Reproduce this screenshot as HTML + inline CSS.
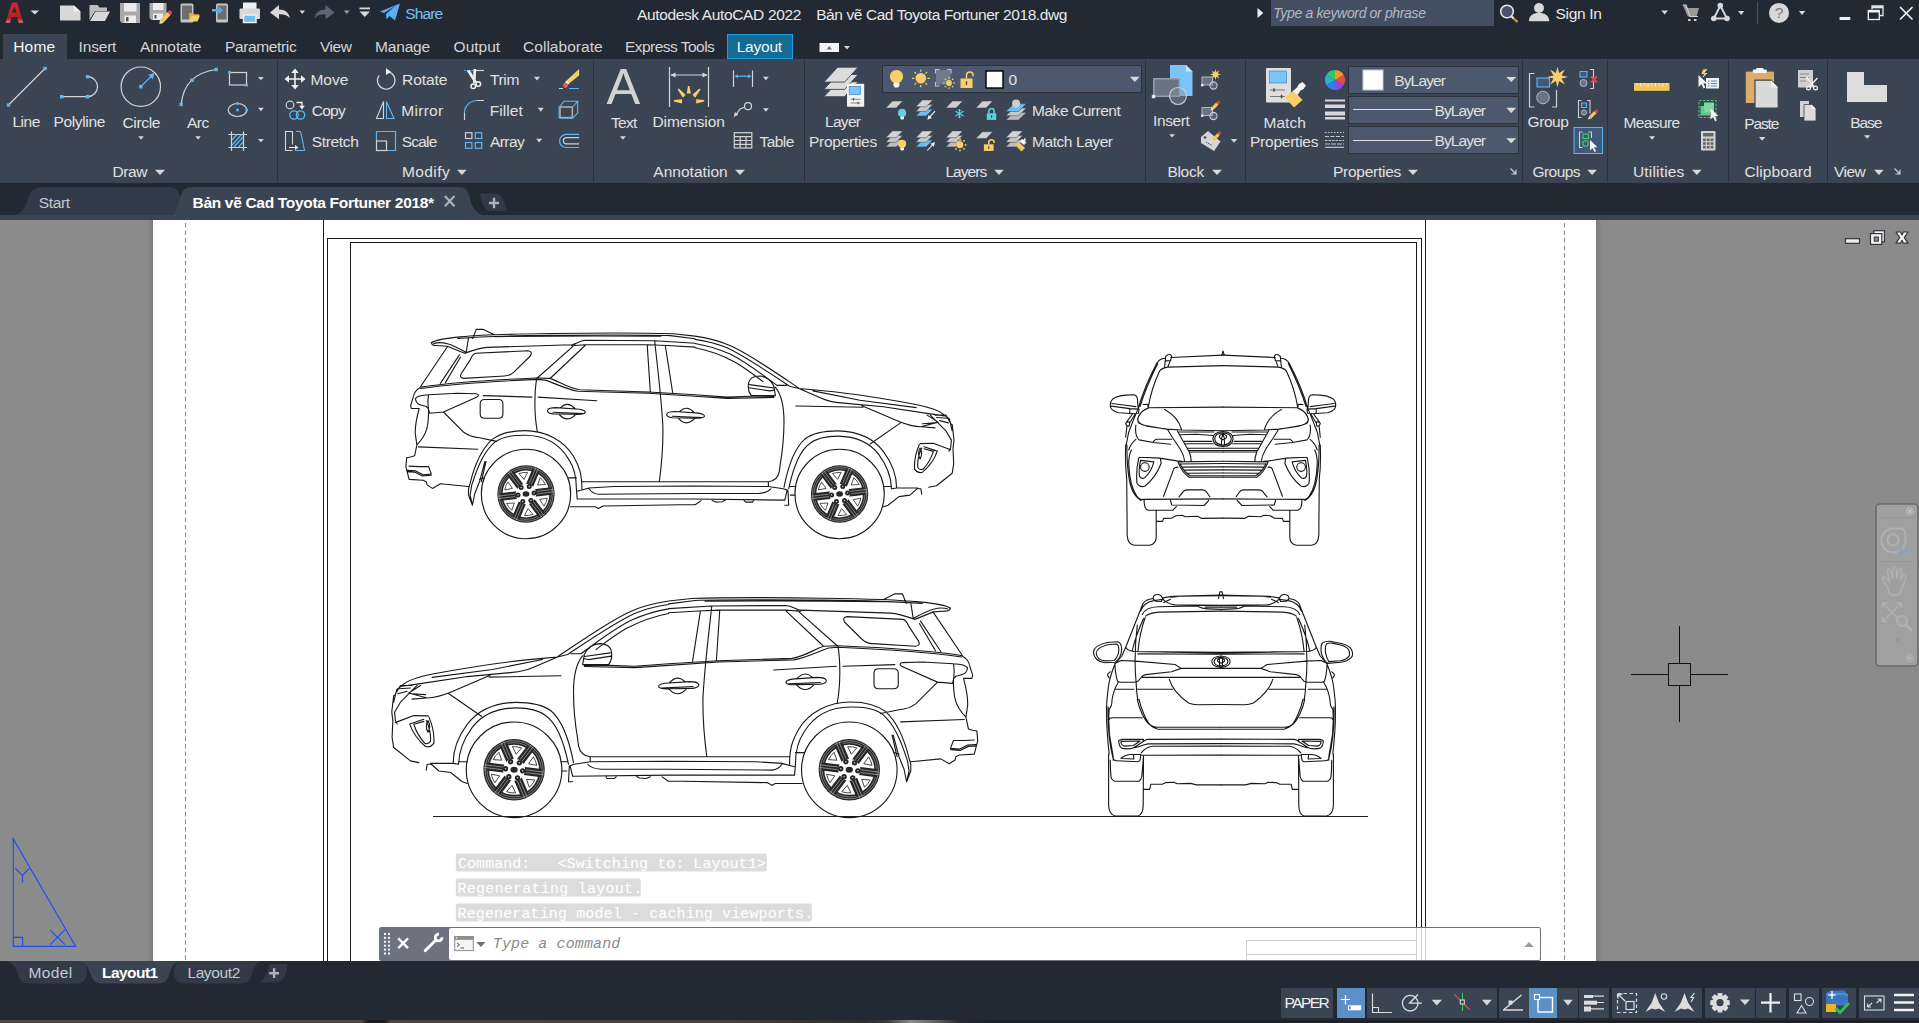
<!DOCTYPE html>
<html><head><meta charset="utf-8"><title>Autodesk AutoCAD 2022 - Bản vẽ Cad Toyota Fortuner 2018.dwg</title>
<style>
html,body{margin:0;padding:0;background:#222933;overflow:hidden}
#app{position:relative;width:1919px;height:1023px;overflow:hidden;font-family:"Liberation Sans",sans-serif}
#app>div{position:absolute}
#app>span{position:absolute;white-space:pre}
#app>svg{position:absolute;left:0;top:0}
</style></head><body><div id="app">
<div style="left:0px;top:0px;width:1919px;height:1023px;background:#222933;"></div>
<div style="left:0px;top:59px;width:1919px;height:124px;background:#3b4453;"></div>
<div style="left:3px;top:34px;width:64px;height:26px;background:#3b4453;"></div>
<div style="left:727px;top:34px;width:66px;height:25px;background:#146b94;border:1px solid #1a9de4;box-sizing:border-box;"></div>
<div style="left:1271px;top:0px;width:223px;height:26px;background:#454f63;"></div>
<div style="left:0px;top:215px;width:1919px;height:5px;background:#3b4453;"></div>
<div style="left:0px;top:220px;width:1919px;height:741px;background:#8b8b8b;"></div>
<div style="left:153px;top:220px;width:1443px;height:741px;background:#ffffff;"></div>
<div style="left:147px;top:220px;width:6px;height:741px;background:linear-gradient(90deg,#8b8b8b,#7c7c7c);"></div>
<div style="left:1596px;top:220px;width:6px;height:741px;background:linear-gradient(90deg,#7c7c7c,#8b8b8b);"></div>
<div style="left:0px;top:1020px;width:1919px;height:3px;background:linear-gradient(90deg,#4f4a40 0,#4f4a40 18.8%,#1a1b20 19.2%,#1a1b20 20%,#4a453c 20.4%,#46413a 38%,#2c2c2e 45%,#3a3a3c 46.2%,#8a8a8a 47.5%,#6a6a6a 48.5%,#26282e 50%,#1d2027 52%,#1d2027 100%);"></div>
<svg width="1919" height="1023" viewBox="0 0 1919 1023">
<rect x="819.5" y="43" width="19.5" height="9" fill="#f4f4f4"/><path d="M826.5 49.5h5.5l-2.75-3.5z" fill="#707070"/>
<path d="M844.0 46.0H850.0L847.0 49.5Z" fill="#d8d8d8"/>
<rect x="277" y="60" width="1" height="122" fill="#2a313c"/>
<rect x="593" y="60" width="1" height="122" fill="#2a313c"/>
<rect x="804" y="60" width="1" height="122" fill="#2a313c"/>
<rect x="1145" y="60" width="1" height="122" fill="#2a313c"/>
<rect x="1245" y="60" width="1" height="122" fill="#2a313c"/>
<rect x="1522" y="60" width="1" height="122" fill="#2a313c"/>
<rect x="1607" y="60" width="1" height="122" fill="#2a313c"/>
<rect x="1728" y="60" width="1" height="122" fill="#2a313c"/>
<rect x="1827" y="60" width="1" height="122" fill="#2a313c"/>
<path d="M155.0 169.7H165.0L160.0 175.0Z" fill="#d8d8d8"/>
<path d="M457.0 169.7H466.7L461.9 175.0Z" fill="#d8d8d8"/>
<path d="M735.0 169.7H745.0L740.0 175.0Z" fill="#d8d8d8"/>
<path d="M994.2 169.7H1003.8L999.0 175.0Z" fill="#d8d8d8"/>
<path d="M1212.0 169.7H1222.0L1217.0 175.0Z" fill="#d8d8d8"/>
<path d="M1408.0 169.7H1418.0L1413.0 175.0Z" fill="#d8d8d8"/>
<path d="M1587.2 169.7H1597.0L1592.1 175.0Z" fill="#d8d8d8"/>
<path d="M1692.0 169.7H1701.7L1696.8 175.0Z" fill="#d8d8d8"/>
<path d="M1874.1 169.7H1883.7L1878.9 175.0Z" fill="#d8d8d8"/>
<path d="M1510.5 168.5l5 5M1516.0 169.5v4.5h-4.5" stroke="#d0d0d0" stroke-width="1.2" fill="none"/>
<path d="M1894.5 168.5l5 5M1900.0 169.5v4.5h-4.5" stroke="#d0d0d0" stroke-width="1.2" fill="none"/>
<path d="M138.3 136.3H143.7L141.0 139.7Z" fill="#d8d8d8"/>
<path d="M195.3 136.3H200.8L198.1 139.7Z" fill="#d8d8d8"/>
<path d="M258.0 77.0H263.8L260.9 80.3Z" fill="#d8d8d8"/>
<path d="M258.0 107.8H263.8L260.9 111.2Z" fill="#d8d8d8"/>
<path d="M258.0 139.0H263.8L260.9 142.3Z" fill="#d8d8d8"/>
<path d="M534.0 76.7H540.0L537.0 80.5Z" fill="#d8d8d8"/>
<path d="M537.8 107.8H543.7L540.8 111.7Z" fill="#d8d8d8"/>
<path d="M536.2 138.7H542.0L539.1 142.5Z" fill="#d8d8d8"/>
<path d="M620.0 136.3H625.8L622.9 139.7Z" fill="#d8d8d8"/>
<path d="M763.0 76.7H768.8L765.9 80.3Z" fill="#d8d8d8"/>
<path d="M763.0 108.3H768.8L765.9 111.7Z" fill="#d8d8d8"/>
<rect x="882.5" y="65.5" width="259" height="27" fill="#4c586d" stroke="#2a313c" stroke-width="1"/>
<rect x="986" y="71" width="17" height="17" fill="#fff" stroke="#000" stroke-width="1.4"/>
<path d="M1130.0 76.7H1139.7L1134.8 82.0Z" fill="#d8d8d8"/>
<path d="M1169.2 134.2H1175.0L1172.1 137.5Z" fill="#d8d8d8"/>
<path d="M1230.8 139.0H1237.2L1234.0 142.8Z" fill="#d8d8d8"/>
<rect x="1348.5" y="66.5" width="170" height="27" fill="#4c586d" stroke="#2a313c" stroke-width="1"/>
<rect x="1348.5" y="96.5" width="170" height="27" fill="#4c586d" stroke="#2a313c" stroke-width="1"/>
<rect x="1348.5" y="126.5" width="170" height="27" fill="#4c586d" stroke="#2a313c" stroke-width="1"/>
<rect x="1363" y="70" width="20" height="20" fill="#fff" stroke="#c8c8c8" stroke-width="1"/>
<path d="M1353 109.5H1432.5M1353 140.5H1432.5" stroke="#e0e0e0" stroke-width="1"/>
<path d="M1506.3 77.0H1516.2L1511.2 82.0Z" fill="#d8d8d8"/>
<path d="M1506.3 107.8H1516.2L1511.2 113.0Z" fill="#d8d8d8"/>
<path d="M1506.3 138.3H1516.2L1511.2 143.3Z" fill="#d8d8d8"/>
<rect x="1574" y="127.5" width="28.5" height="26" fill="#40587a" stroke="#5db7f3" stroke-width="1"/>
<path d="M1649.2 136.3H1655.0L1652.1 139.7Z" fill="#d8d8d8"/>
<path d="M1759.0 137.0H1765.4L1762.2 140.7Z" fill="#d8d8d8"/>
<path d="M1864.1 135.2H1870.2L1867.2 138.8Z" fill="#d8d8d8"/>
<path d="M14 215C22 214 25 208 27.500 200C30 192 33 187 42 187H169C176 187 180.500 192 180.500 201C180.500 210 176 215 169 215z" fill="#323a48"/>
<path d="M160 220C171 219 175 214 177.500 206L180.500 196C182.500 190 186 187 193 187H459C465 187 467.500 190 469.500 197C472 207 475 213 483 215L490 220z" fill="#3b4453"/>
<path d="M480 193.400H495C502 194 506 202 506 211H489.500C484 210 481.500 202 480 193.400z" fill="#323a48"/>
<path d="M444.800 196l9.700 10.300M454.500 196l-9.700 10.300" stroke="#aeb2ba" stroke-width="2.100"/>
<path d="M489 203h10M494 197.800v10.400" stroke="#aeb2ba" stroke-width="2.400"/>
<defs><linearGradient id="gA" x1="0" y1="0" x2="0" y2="1"><stop offset="0" stop-color="#d4262b"/><stop offset=".55" stop-color="#bc2428"/><stop offset=".78" stop-color="#a82226"/><stop offset="1" stop-color="#ec7272"/></linearGradient></defs><path d="M5.500 22.700L12 2.500H17L23.300 22.700H18.600L17.200 17H11.600L10.100 22.700ZM14.500 6.300L12 12.600H16.600Z" fill="url(#gA)" fill-rule="evenodd"/>
<path d="M30.5 10.5H39.0L34.8 14.5Z" fill="#d8d8d8"/>
<path d="M60 5.500h14l6.500 6v9H60z" fill="#d8d8d8"/><path d="M74 5.500v6h6.500z" fill="#f4f4f4"/>
<path d="M89.500 5h8l2 2.500h7.500v3.500H95l-5.500 9z" fill="#bdbdbd"/><path d="M95.500 11.500H110l-5 9.500H90z" fill="#d8d8d8"/>
<path d="M120 3h20v20h-18l-2-2z" fill="#a9a9a9"/><rect x="124" y="3" width="12.500" height="8.500" fill="#ececec"/><rect x="124.5" y="15.500" width="11.500" height="7.500" fill="#ececec"/><rect x="126" y="17" width="2.500" height="4.500" fill="#555"/>
<path d="M149.500 3h17v17h-15l-2-2z" fill="#a9a9a9"/><rect x="153" y="3" width="10.500" height="7" fill="#ececec"/><rect x="153" y="13.500" width="10" height="6.500" fill="#ececec"/><rect x="154.500" y="15" width="2" height="3.500" fill="#555"/><path d="M160 20l7.500-8 3 3-7.500 8-3.500.800z" fill="#f3c65a"/><path d="M167.500 12l1.200-1.300a1.500 1.500 0 0 1 2.100 0l.9.900a1.500 1.500 0 0 1 0 2.100L170.500 15z" fill="#e2404a"/><path d="M160 20l3 3-3.500.800z" fill="#d8d8d8"/>
<rect x="180.500" y="3.500" width="13" height="19" rx="1.500" fill="#c4c4c4"/><rect x="182" y="5.500" width="10" height="14" fill="#6e6e6e"/><path d="M189 13h4l1 1.200h5v2H191.500l-2.500 5z" fill="#e0a830"/><path d="M191.500 15.500h8.500l-2.500 6h-8.500z" fill="#f8cf6a"/>
<rect x="216" y="3.500" width="12" height="19" rx="1.500" fill="#c4c4c4"/><rect x="217.500" y="5.500" width="9" height="14" fill="#6e6e6e"/><path d="M212 9h6.500v-2.800l4.500 4-4.500 4v-2.800H212z" fill="#4fb0f5"/>
<rect x="243" y="2.500" width="13.500" height="7" fill="#f0f0f0"/><rect x="239.500" y="8.500" width="20.500" height="10.500" rx="1" fill="#d8d8d8"/><rect x="243.500" y="15" width="12.500" height="7.500" fill="#6cbcf5" stroke="#f0f0f0" stroke-width="1.500"/>
<path d="M270 12.500l9-7.500v4.500c6 0 10 3 11 9-2.500-3.500-6-4.500-11-4.300v5z" fill="#d8d8d8"/>
<path d="M299.5 10.5H305.0L302.2 14.0Z" fill="#d8d8d8"/>
<path d="M334.500 12.500l-9-7.500v4.500c-6 0-10 3-11 9 2.500-3.500 6-4.500 11-4.300v5z" fill="#5d6571"/>
<path d="M344.0 10.5H349.5L346.8 14.0Z" fill="#9ea3ab"/>
<rect x="359.500" y="7.500" width="10.500" height="1.800" fill="#d8d8d8"/><path d="M359.500 11.500h10.500l-5.250 5.500z" fill="#d8d8d8"/>
<path d="M380 11.500L400 3.500l-5 17-5.500-4.500-3 3.500-.5-5.500 9-8-11 7z" fill="#56b0f2"/>
<path d="M1257.500 8v10l5.800-5z" fill="#f0f0f0"/>
<circle cx="1507" cy="11.500" r="6.300" fill="#4a5468" stroke="#e8e8e8" stroke-width="1.600"/><path d="M1511.500 16.500l6 5.500" stroke="#d89a4a" stroke-width="2.200"/><path d="M1511.500 16.500l2 1.800" stroke="#e8e8e8" stroke-width="2"/>
<circle cx="1539" cy="8" r="5" fill="#d8d8d8"/><path d="M1528.800 21.300c.5-6 4-8.300 10.200-8.300s9.700 2.300 10.300 8.300z" fill="#d8d8d8"/>
<path d="M1661.3 10.5H1668.0L1664.7 14.5Z" fill="#d8d8d8"/>
<path d="M1682.800 5h3.200l1.500 3h11.500l-2.500 8.500h-8.800z" fill="#9a9a9a"/><path d="M1682.800 5h3.200l4 11.500h8" fill="none" stroke="#cfcfcf" stroke-width="1.200"/><rect x="1688" y="19" width="2.500" height="2" fill="#cfcfcf"/><rect x="1694" y="19" width="2.500" height="2" fill="#cfcfcf"/>
<path d="M1720.300 5.600L1713.800 18.500h13.200z" fill="none" stroke="#d8d8d8" stroke-width="2"/><circle cx="1720.300" cy="5.600" r="2.800" fill="#d8d8d8"/><circle cx="1713.800" cy="18.500" r="2.800" fill="#d8d8d8"/><circle cx="1727" cy="18.500" r="2.800" fill="#d8d8d8"/>
<path d="M1738.0 11.0H1744.3L1741.2 15.0Z" fill="#d8d8d8"/>
<rect x="1757" y="2" width="1" height="22" fill="#4a5670"/>
<circle cx="1779" cy="12.900" r="10" fill="#d8d8d8"/>
<path d="M1798.8 11.0H1805.3L1802.0 15.0Z" fill="#d8d8d8"/>
<rect x="1839.600" y="17" width="10.700" height="3" fill="#f0f0f0"/>
<path d="M1872 9.500v-3.500h11v9.500h-3.500" fill="none" stroke="#e8e8e8" stroke-width="1.300"/><path d="M1872 7.300h11" stroke="#e8e8e8" stroke-width="2"/><rect x="1868.300" y="10.500" width="11" height="9" fill="none" stroke="#f0f0f0" stroke-width="1.300"/><path d="M1868.300 11.500h11" stroke="#f0f0f0" stroke-width="2"/>
<path d="M1900 7l12.500 12.500M1912.500 7l-12.500 12.500" stroke="#f0f0f0" stroke-width="1.700"/>
<path d="M8.500 105L45 68.500" stroke="#d4d4d4" stroke-width="1.200"/><rect x="6.8" y="103.3" width="3.4" height="3.4" fill="#5cb8f5"/><rect x="43.3" y="66.8" width="3.4" height="3.4" fill="#5cb8f5"/>
<path d="M61.700 96.700H87.500M87.500 96.700a10 10 0 0 0 0-20" stroke="#d4d4d4" stroke-width="1.200" fill="none"/><rect x="60.0" y="95.0" width="3.4" height="3.4" fill="#5cb8f5"/><rect x="85.8" y="95.0" width="3.4" height="3.4" fill="#5cb8f5"/><rect x="85.8" y="75.0" width="3.4" height="3.4" fill="#5cb8f5"/>
<circle cx="140.800" cy="86.700" r="19.700" fill="none" stroke="#d4d4d4" stroke-width="1.200"/><path d="M140.800 86.700L152 75.500" stroke="#5cb8f5" stroke-width="1.200"/><path d="M154.500 73l-6.200 1.800 4.400 4.400z" fill="#5cb8f5"/><rect x="139.1" y="85.0" width="3.4" height="3.4" fill="#5cb8f5"/>
<path d="M181.200 104.500Q184 74 216.200 69.500" stroke="#d4d4d4" stroke-width="1.200" fill="none"/><rect x="179.5" y="102.8" width="3.4" height="3.4" fill="#5cb8f5"/><rect x="190.3" y="78.6" width="3.4" height="3.4" fill="#5cb8f5"/><rect x="214.5" y="67.8" width="3.4" height="3.4" fill="#5cb8f5"/>
<rect x="229.500" y="72.500" width="17" height="12.500" fill="none" stroke="#d4d4d4" stroke-width="1.200"/><rect x="228.1" y="71.1" width="2.8" height="2.8" fill="#5cb8f5"/><rect x="245.1" y="83.6" width="2.8" height="2.8" fill="#5cb8f5"/>
<ellipse cx="237.500" cy="110" rx="9.300" ry="6.500" fill="none" stroke="#d4d4d4" stroke-width="1.200"/><rect x="236.2" y="108.7" width="2.6" height="2.6" fill="#5cb8f5"/><rect x="236.2" y="102.2" width="2.6" height="2.6" fill="#5cb8f5"/><rect x="245.5" y="108.7" width="2.6" height="2.6" fill="#5cb8f5"/>
<path d="M231.500 131.500v19.500M243.500 131.500v19.500M228.500 134.500h18.500M228.500 147.500h18.500" stroke="#d4d4d4" stroke-width="1.200"/><path d="M232 140l5-5.500M232 145l9.500-10.500M234 147l9-10M238.500 147l4.500-5" stroke="#5cb8f5" stroke-width="1.200"/>
<path d="M295 70.500v17M286.500 79h17" stroke="#f0f0f0" stroke-width="1.600"/><path d="M295 68.500l3.800 4.500h-7.600zM295 89.500l3.800-4.500h-7.600zM284.500 79l4.500-3.800v7.600zM305.500 79l-4.500-3.800v7.600z" fill="#f0f0f0"/>
<circle cx="290" cy="105" r="3.800" fill="none" stroke="#d4d4d4" stroke-width="1.200"/><path d="M296.500 102.500h5.500v4" stroke="#f0f0f0" stroke-width="1.300" fill="none"/><path d="M302 109.500l-2.800-3.800h5.600z" fill="#f0f0f0"/><circle cx="294" cy="115" r="4.200" fill="none" stroke="#5cb8f5" stroke-width="1.300"/><circle cx="300.500" cy="115" r="4.200" fill="none" stroke="#5cb8f5" stroke-width="1.300"/>
<path d="M292.500 150.500H285.500V131.500H292.500V144.500" stroke="#d4d4d4" stroke-width="1.100" fill="none"/><path d="M296 131.500h4.500l4 19h-9.500" stroke="#5cb8f5" stroke-width="1.100" fill="none"/><path d="M289 147.500h7" stroke="#f0f0f0" stroke-width="1.100"/><path d="M298.500 147.500l-3.500-2.500v5z" fill="#f0f0f0"/>
<path d="M388.500 71.800a8.800 8.800 0 1 1-9.500 3.500" stroke="#d4d4d4" stroke-width="1.300" fill="none"/><path d="M391 71.800l-5-3.500v6.800z" fill="#f0f0f0"/>
<path d="M383.500 101.500v17h-7z" stroke="#d4d4d4" stroke-width="1.100" fill="none"/><path d="M386.500 101.500v17h7.500z" stroke="#5cb8f5" stroke-width="1.100" fill="none"/>
<path d="M376.500 141v-9.500h19v19h-9" stroke="#5cb8f5" stroke-width="1.200" fill="none"/><rect x="376.500" y="141" width="10" height="9.500" fill="none" stroke="#d4d4d4" stroke-width="1.200"/>
<path d="M464 70.500h9" stroke="#5cb8f5" stroke-width="1.200" stroke-dasharray="1.500 1"/><path d="M475 70.500h9" stroke="#d4d4d4" stroke-width="1.200"/><path d="M466.800 71L469.600 69.800L477 82L474.800 83.200ZM473.400 69H476.200L475.600 82L473 83.500Z" fill="#f0f0f0"/><circle cx="473.300" cy="86.300" r="2.300" fill="none" stroke="#f0f0f0" stroke-width="1.500"/><circle cx="478.300" cy="84" r="2.300" fill="none" stroke="#f0f0f0" stroke-width="1.500"/>
<path d="M464.500 113v7M477 100.500h7" stroke="#d4d4d4" stroke-width="1.200" fill="none"/><path d="M464.500 113a12.500 12.500 0 0 1 12.500-12.500" stroke="#5cb8f5" stroke-width="1.200" fill="none"/>
<rect x="465.5" y="132.7" width="6.400" height="5.800" fill="none" stroke="#d4d4d4" stroke-width="1.200"/>
<rect x="475.3" y="132.7" width="6.400" height="5.800" fill="none" stroke="#5cb8f5" stroke-width="1.200"/>
<rect x="465.5" y="142.5" width="6.400" height="5.800" fill="none" stroke="#5cb8f5" stroke-width="1.200"/>
<rect x="475.3" y="142.5" width="6.400" height="5.800" fill="none" stroke="#5cb8f5" stroke-width="1.200"/>
<path d="M579.100 69.100V75.600L569.700 83.100L566.600 80.600Z" fill="#f8cf6a"/><path d="M566.600 80.600L569.700 83.100L568.200 84.500L565 82.200Z" fill="#f4f4f4"/><path d="M565 82.200L568.200 84.500L567.300 87Q565.500 88.500 564.500 87.900L563.200 86.100Q563 84.500 563.600 83.800Z" fill="#f05a5a"/><path d="M559 88.500h4" stroke="#d4d4d4" stroke-width="1"/><path d="M569 88.500h10" stroke="#5cb8f5" stroke-width="1"/>
<path d="M559.500 106.500L564.100 101.300H577.700L573.200 106.500M577.700 101.300V112.900L573.200 117.600" fill="none" stroke="#5cb8f5" stroke-width="1.100"/><rect x="560" y="107" width="12.300" height="10.600" fill="none" stroke="#b4b4b4" stroke-width="1.500"/><path d="M559 106v12.300h14.200" fill="none" stroke="#5cb8f5" stroke-width=".8"/>
<path d="M579.100 134.300H566.200a6.600 6.600 0 0 0 0 13.200H579.100" fill="none" stroke="#5cb8f5" stroke-width="1.200"/><path d="M579.100 137.600H566.500a3.100 3.100 0 0 0 0 6.200H579.100" fill="none" stroke="#d0d0d0" stroke-width="1.200"/>
<path d="M669.500 67v40M708.500 67v40M671 75h36" stroke="#d4d4d4" stroke-width="1.200"/><path d="M670.500 75l5-2.500v5zM707.500 75l-5-2.500v5z" fill="#d4d4d4"/><path d="M688 86h1.500l1.300 7.600h-4.100zM677.600 89.500l1.200-.9 6.800 6.200-2.600 2.900zM700.500 89.500l-1.200-.9-6.800 6.200 2.600 2.900zM674 100l0 1.500 8 2v-4.200zM704.200 100l0 1.500-8 2v-4.200z" fill="#f8cf6a"/>
<path d="M733.500 70.500v16.500M752.500 70.500v16.500" stroke="#d4d4d4" stroke-width="1.200"/><path d="M736 76.200h14" stroke="#5cb8f5" stroke-width="1.200"/><path d="M734.500 76.200l3.500-2v4zM751.500 76.200l-3.500-2v4z" fill="#5cb8f5"/>
<circle cx="748" cy="106.200" r="3.500" fill="none" stroke="#d4d4d4" stroke-width="1.200"/><path d="M744.700 107.200l-4.500 1.500-4.500 6.500" stroke="#d4d4d4" stroke-width="1.200" fill="none"/><path d="M733.800 117l1-5 3.500 2.800z" fill="#d4d4d4"/>
<rect x="734.300" y="132.700" width="17.500" height="15.300" fill="none" stroke="#d4d4d4" stroke-width="1.200"/><path d="M734.300 136.700h17.500M734.300 140.500h17.500M734.300 144.300h17.500M740.200 136.700v11.300M746 136.700v11.300" stroke="#d4d4d4" stroke-width="1.200"/>
<path d="M837.700 81.8H858.100L844.600 96.7H823.900Z" fill="#dcdcdc" stroke="#3b4453" stroke-width=".9"/><path d="M837.700 74.5H858.100L844.600 89.4H823.900Z" fill="#dcdcdc" stroke="#3b4453" stroke-width=".9"/><path d="M837.700 67.2H858.100L844.600 82.1H823.900Z" fill="#dcdcdc" stroke="#3b4453" stroke-width=".9"/>
<rect x="847" y="83.800" width="17.200" height="23" rx=".8" fill="#f2f2f2"/><rect x="849.300" y="86.400" width="11.200" height="8" fill="#7cc4f8" stroke="#4a90d0" stroke-width=".8"/><path d="M850.500 99.300h10M850.500 103h10" stroke="#777" stroke-width=".9"/><path d="M853.500 98v2.600M858 101.700v2.600" stroke="#555" stroke-width="1.200"/>
<circle cx="896.5" cy="76.5" r="6.6" fill="#f8cf6a"/><path d="M893.5 82.4h5.9v3.0l-1.3 2.0h-3.3l-1.3 -2.0z" fill="#f4f4f4"/>
<circle cx="920.8" cy="78.3" r="5.3" fill="#f8cf6a"/><path d="M927.4 78.3L929.7 78.3M925.5 83.0L927.1 84.6M920.8 84.9L920.8 87.2M916.1 83.0L914.5 84.6M914.2 78.3L911.9 78.3M916.1 73.6L914.5 72.0M920.8 71.7L920.8 69.4M925.5 73.6L927.1 72.0" stroke="#f8cf6a" stroke-width="1.2"/>
<rect x="936" y="70" width="14.500" height="14.500" fill="#6f7a8c"/><path d="M935.500 73.500v-4h4M947 69.500h4v4M935.500 82v4h4" fill="none" stroke="#c4c8ce" stroke-width="1.100"/><circle cx="949" cy="83" r="2.900" fill="#f8cf6a"/><rect x="953.4" y="82.3" width="1.400" height="1.400" fill="#f8cf6a"/><rect x="951.9" y="85.9" width="1.400" height="1.400" fill="#f8cf6a"/><rect x="948.3" y="87.4" width="1.400" height="1.400" fill="#f8cf6a"/><rect x="944.7" y="85.9" width="1.400" height="1.400" fill="#f8cf6a"/><rect x="943.2" y="82.3" width="1.400" height="1.400" fill="#f8cf6a"/><rect x="944.7" y="78.7" width="1.400" height="1.400" fill="#f8cf6a"/><rect x="948.3" y="77.2" width="1.400" height="1.400" fill="#f8cf6a"/><rect x="951.9" y="78.7" width="1.400" height="1.400" fill="#f8cf6a"/>
<path d="M966.5 78.5v-3.3a3.3 3.3 0 0 1 6.6 0v1.4" fill="none" stroke="#f8cf6a" stroke-width="1.500"/><rect x="960.5" y="78.5" width="12" height="9.5" fill="#f8cf6a"/><rect x="965.9" y="81.3" width="1.200" height="3.8" fill="#3b4453"/>
<path d="M892.4 101.1H902.7L896.2 107.9H885.9Z" fill="#d0d0d0" stroke="#3b4453" stroke-width=".5"/><circle cx="902.1" cy="112.9" r="4.1" fill="#5fd0dc"/><path d="M900.3 116.6h3.7v1.8l-0.8 1.2h-2.0l-0.8 -1.2z" fill="#f4f4f4"/>
<path d="M922.4 109.2H932.7L926.2 116.0H915.9Z" fill="#6cbcf5" stroke="#3b4453" stroke-width=".5"/><path d="M922.4 104.6H932.7L926.2 111.4H915.9Z" fill="#c8c8c8" stroke="#3b4453" stroke-width=".5"/><path d="M922.4 100.0H932.7L926.2 106.8H915.9Z" fill="#d4d4d4" stroke="#3b4453" stroke-width=".5"/><path d="M935 111.100l-5.800 6.500" stroke="#f0f0f0" stroke-width="1.200"/><path d="M927.300 119.700l1.200-4.800 3.400 3z" fill="#f0f0f0"/>
<path d="M952.4 101.1H962.7L956.2 107.9H945.9Z" fill="#d0d0d0" stroke="#3b4453" stroke-width=".5"/><path d="M959.500 109v9.200M955.500 111.300l8 4.600M963.500 111.300l-8 4.600" stroke="#5fd0dc" stroke-width="1.100"/><path d="M957.800 109.800l1.700 1.500 1.700-1.500M957.800 117.400l1.700-1.500 1.700 1.500" stroke="#5fd0dc" stroke-width=".8" fill="none"/>
<path d="M982.4 101.1H992.7L986.2 107.9H975.9Z" fill="#d0d0d0" stroke="#3b4453" stroke-width=".5"/><path d="M988.9 113.2v-2.0a2.6 2.6 0 0 1 5.2 0v2.0" fill="none" stroke="#5fd0dc" stroke-width="1.500"/><rect x="986.8" y="113.2" width="9.4" height="6.7" fill="#5fd0dc"/><rect x="990.9" y="115.2" width="1.200" height="2.7" fill="#3b4453"/>
<path d="M1013.9 112.4H1026.4L1018.4 120.1H1005.9Z" fill="#bcbcbc" stroke="#3b4453" stroke-width=".5"/><path d="M1013.9 108.1H1026.4L1018.4 115.8H1005.9Z" fill="#c8c8c8" stroke="#3b4453" stroke-width=".5"/><path d="M1013.9 103.8H1026.4L1018.4 111.5H1005.9Z" fill="#6cbcf5" stroke="#3b4453" stroke-width=".5"/><circle cx="1016.100" cy="103.600" r="4" fill="#cecece"/>
<path d="M892.4 140.1H902.7L896.2 146.9H885.9Z" fill="#bcbcbc" stroke="#3b4453" stroke-width=".5"/><path d="M892.4 135.5H902.7L896.2 142.3H885.9Z" fill="#c8c8c8" stroke="#3b4453" stroke-width=".5"/><path d="M892.4 130.9H902.7L896.2 137.7H885.9Z" fill="#d4d4d4" stroke="#3b4453" stroke-width=".5"/><circle cx="902.1" cy="143.8" r="4.1" fill="#f8cf6a"/><path d="M900.3 147.5h3.7v1.8l-0.8 1.2h-2.0l-0.8 -1.2z" fill="#f4f4f4"/>
<path d="M922.4 140.1H932.7L926.2 146.9H915.9Z" fill="#6cbcf5" stroke="#3b4453" stroke-width=".5"/><path d="M922.4 135.5H932.7L926.2 142.3H915.9Z" fill="#c8c8c8" stroke="#3b4453" stroke-width=".5"/><path d="M922.4 130.9H932.7L926.2 137.7H915.9Z" fill="#d4d4d4" stroke="#3b4453" stroke-width=".5"/><path d="M927.300 150.600l5.800-6.500" stroke="#d4d4d4" stroke-width="1.200"/><path d="M935 142l-1.200 4.800-3.400-3z" fill="#f0f0f0"/>
<path d="M952.4 140.1H962.7L956.2 146.9H945.9Z" fill="#bcbcbc" stroke="#3b4453" stroke-width=".5"/><path d="M952.4 135.5H962.7L956.2 142.3H945.9Z" fill="#c8c8c8" stroke="#3b4453" stroke-width=".5"/><path d="M952.4 130.9H962.7L956.2 137.7H945.9Z" fill="#d4d4d4" stroke="#3b4453" stroke-width=".5"/><circle cx="960" cy="144.900" r="3.300" fill="#f8cf6a"/><rect x="964.8" y="144.1" width="1.600" height="1.600" fill="#f8cf6a"/><rect x="963.2" y="148.1" width="1.600" height="1.600" fill="#f8cf6a"/><rect x="959.2" y="149.7" width="1.600" height="1.600" fill="#f8cf6a"/><rect x="955.2" y="148.1" width="1.600" height="1.600" fill="#f8cf6a"/><rect x="953.6" y="144.1" width="1.600" height="1.600" fill="#f8cf6a"/><rect x="955.2" y="140.1" width="1.600" height="1.600" fill="#f8cf6a"/><rect x="959.2" y="138.5" width="1.600" height="1.600" fill="#f8cf6a"/><rect x="963.2" y="140.1" width="1.600" height="1.600" fill="#f8cf6a"/>
<path d="M982.4 131.8H992.7L986.2 138.6H975.9Z" fill="#d0d0d0" stroke="#3b4453" stroke-width=".5"/><path d="M988.8 144.3v-2.3a2.7 2.7 0 0 1 5.3 0v1.0" fill="none" stroke="#f8cf6a" stroke-width="1.500"/><rect x="983.9" y="144.3" width="9.7" height="6.6" fill="#f8cf6a"/><rect x="988.1" y="146.3" width="1.200" height="2.6" fill="#3b4453"/>
<path d="M1012.4 140.1H1022.7L1016.2 146.9H1005.9Z" fill="#bcbcbc" stroke="#3b4453" stroke-width=".5"/><path d="M1012.4 135.5H1022.7L1016.2 142.3H1005.9Z" fill="#c8c8c8" stroke="#3b4453" stroke-width=".5"/><path d="M1012.4 130.9H1022.7L1016.2 137.7H1005.9Z" fill="#d4d4d4" stroke="#3b4453" stroke-width=".5"/><path d="M1015.500 145.500l3.500-3.500 6 6-3.500 3.500z" fill="#f3c65a"/><path d="M1019.500 141.500l2.500-2.500 1.500 1 1-2 1.500 1.500-1 1.500 1.500 1.500-2.500 2.500z" fill="#f4f4f4"/>
<path d="M1170 65h16l6.500 6.500v24.500h-22.500z" fill="#7cc4f8"/><path d="M1186 65v6.500h6.500z" fill="#c6e6fc"/><rect x="1153.800" y="78.800" width="25.500" height="17.500" fill="#6a7383" stroke="#9aa1ae" stroke-width="1.500"/><rect x="1151.800" y="94.800" width="3.400" height="3.400" fill="#e8e8e8"/><circle cx="1178" cy="96" r="8.500" fill="#8a92a0" fill-opacity=".45" stroke="#c8ccd2" stroke-width="1.200"/>
<rect x="1202" y="77" width="10.500" height="8" fill="#6a7383" stroke="#b4b8c0" stroke-width="1"/><rect x="1201" y="84" width="2.400" height="2.400" fill="#e8e8e8"/><circle cx="1213.5" cy="85.5" r="3.600" fill="#8a92a0" fill-opacity=".4" stroke="#c8ccd2" stroke-width="1.100"/><path d="M1215.5 69.0L1216.4 72.3L1219.4 70.6L1217.7 73.6L1221.0 74.5L1217.7 75.4L1219.4 78.4L1216.4 76.7L1215.5 80.0L1214.6 76.7L1211.6 78.4L1213.3 75.4L1210.0 74.5L1213.3 73.6L1211.6 70.6L1214.6 72.3Z" fill="#f8cf6a"/>
<rect x="1202" y="107.5" width="10.500" height="8" fill="#6a7383" stroke="#b4b8c0" stroke-width="1"/><rect x="1201" y="114.5" width="2.400" height="2.400" fill="#e8e8e8"/><circle cx="1213.5" cy="116.0" r="3.600" fill="#8a92a0" fill-opacity=".4" stroke="#c8ccd2" stroke-width="1.100"/><path d="M1210.5 110.5L1213.8 109.5L1211.5 107.2Z" fill="#e0e0e0"/><path d="M1213.8 109.5L1218.5 104.8L1216.2 102.5L1211.5 107.2Z" fill="#f3c65a"/><path d="M1218.5 104.8L1220.6 102.6L1218.4 100.4L1216.2 102.5Z" fill="#e2404a"/>
<path d="M1201 137l7-6 12.500 10.500-6.500 9.500-13-8z" fill="#d6d6d6"/><circle cx="1205" cy="137.500" r="1.300" fill="#3b4453"/><path d="M1206 142l6 3.500" stroke="#3b4453" stroke-width="1" stroke-dasharray="1.500 1"/><path d="M1211.0 142.5L1214.2 141.3L1211.8 139.2Z" fill="#e0e0e0"/><path d="M1214.2 141.3L1219.7 135.3L1217.3 133.2L1211.8 139.2Z" fill="#f3c65a"/><path d="M1219.7 135.3L1221.7 133.1L1219.3 130.9L1217.3 133.2Z" fill="#e2404a"/>
<rect x="1266" y="68" width="25" height="34.500" rx="1" fill="#dedede"/><rect x="1269.500" y="71" width="17" height="12" fill="#7cc4f8" stroke="#4a90d0" stroke-width=".8"/><path d="M1270 90h15M1270 96.500h15" stroke="#777" stroke-width="1"/><path d="M1274 88.200v3.600M1281.500 94.700v3.600" stroke="#444" stroke-width="1.500"/><path d="M1285 97.500l8.500-7 9 9.500-8.500 7.500z" fill="#f8cf6a"/><path d="M1293 91l4-3.500 2-3.500 3.500-2 3.500 3.500-2.500 3.500-3 1.500-3 4.500z" fill="#f4f4f4"/>
<path d="M1335 80L1335.00 70.00A10 10 0 0 1 1343.66 75.00Z" fill="#f39a1e"/>
<path d="M1335 80L1343.66 75.00A10 10 0 0 1 1343.66 85.00Z" fill="#e84a4a"/>
<path d="M1335 80L1343.66 85.00A10 10 0 0 1 1335.00 90.00Z" fill="#8b4ae8"/>
<path d="M1335 80L1335.00 90.00A10 10 0 0 1 1326.34 85.00Z" fill="#3a7ae8"/>
<path d="M1335 80L1326.34 85.00A10 10 0 0 1 1326.34 75.00Z" fill="#21b6c8"/>
<path d="M1335 80L1326.34 75.00A10 10 0 0 1 1335.00 70.00Z" fill="#35c26a"/>
<rect x="1325" y="99.500" width="20" height="2" fill="#d8d8d8"/><rect x="1325" y="104.500" width="20" height="3.500" fill="#d8d8d8"/><rect x="1325" y="111.500" width="20" height="4" fill="#d8d8d8"/><rect x="1325" y="117" width="20" height="2.500" fill="#d8d8d8"/>
<path d="M1325 132.500h19" stroke="#c8c8c8" stroke-width="1.200" stroke-dasharray="1.500 1.500"/><path d="M1325 136.500h19" stroke="#c8c8c8" stroke-width="1.200" stroke-dasharray="4 1.500"/><path d="M1325 140.500h19" stroke="#c8c8c8" stroke-width="1.200" stroke-dasharray="2.500 1"/><path d="M1325 144h19" stroke="#c8c8c8" stroke-width="1.200" stroke-dasharray="5 1"/><path d="M1325 147.300h19" stroke="#c8c8c8" stroke-width="1.200"/>
<path d="M1534.500 73.500h-5v33.500h5M1552 107h4.500v-17" fill="none" stroke="#d0d0d0" stroke-width="1.200"/><rect x="1537" y="78" width="12.500" height="9" fill="#40587a" stroke="#5cb8f5" stroke-width="1.100"/><circle cx="1543" cy="97.500" r="6.300" fill="#6a7383" stroke="#b4b8c0" stroke-width="1"/><path d="M1557.5 66.5L1559.1 73.0L1564.9 69.6L1561.5 75.4L1568.0 77.0L1561.5 78.6L1564.9 84.4L1559.1 81.0L1557.5 87.5L1555.9 81.0L1550.1 84.4L1553.5 78.6L1547.0 77.0L1553.5 75.4L1550.1 69.6L1555.9 73.0Z" fill="#f8cf6a"/>
<rect x="1580" y="71.500" width="7" height="5.500" fill="#40587a" stroke="#5cb8f5" stroke-width="1"/><circle cx="1583.500" cy="83" r="3.500" fill="#6a7383" stroke="#b4b8c0" stroke-width="1"/><path d="M1590 69.500h3.500v19h-3.500" fill="none" stroke="#d0d0d0" stroke-width="1.100"/><path d="M1591 76.500l6 6M1597 76.500l-6 6" stroke="#e2404a" stroke-width="1.800"/>
<path d="M1581.500 100.500h-3v17h3M1587 100.500h3v13" fill="none" stroke="#d0d0d0" stroke-width="1.100"/><rect x="1581.500" y="103" width="5" height="4.500" fill="#40587a" stroke="#5cb8f5" stroke-width="1"/><circle cx="1584" cy="112.500" r="2.600" fill="#6a7383" stroke="#b4b8c0" stroke-width="1"/><path d="M1588.0 119.5L1591.3 118.5L1589.0 116.2Z" fill="#e0e0e0"/><path d="M1591.3 118.5L1596.5 113.3L1594.2 111.0L1589.0 116.2Z" fill="#f3c65a"/><path d="M1596.5 113.3L1598.6 111.1L1596.4 108.9L1594.2 111.0Z" fill="#e2404a"/>
<path d="M1582.500 132h-3v15.500h3M1588.500 132h3v6" fill="none" stroke="#d0d0d0" stroke-width="1.100"/><rect x="1583" y="134" width="5.500" height="4.500" fill="none" stroke="#4bc86a" stroke-width="1.100"/><circle cx="1585.500" cy="143.500" r="2.800" fill="none" stroke="#4bc86a" stroke-width="1.100"/><path d="M1590 140v10.500l2.500-2.500 2 4 1.500-.8-2-4h3.500z" fill="#f4f4f4"/>
<rect x="1634" y="83" width="35.500" height="7.800" fill="#f3c65a"/><path d="M1637.0 83v2.3M1640.7 83v3.5M1644.4 83v2.3M1648.1 83v3.5M1651.8 83v2.3M1655.5 83v3.5M1659.2 83v2.3M1662.9 83v3.5M1666.6 83v2.3" stroke="#fdeebc" stroke-width="1"/>
<path d="M1703 69.500l4.500-.5-3 4h3l-5 5 1.500-4h-2.500z" fill="#f8cf6a"/><path d="M1698.500 75v12l3-2.800 2 4.300 1.800-.9-2-4.200h4z" fill="#f4f4f4"/><rect x="1706" y="78" width="13" height="10.500" fill="#f0f0f0"/><path d="M1708 81h1.500M1711 81h6M1708 83.500h1.500M1711 83.500h6M1708 86h1.500M1711 86h6" stroke="#3a8ae8" stroke-width="1.100"/>
<rect x="1699" y="100.500" width="17" height="17" fill="none" stroke="#4bc86a" stroke-width="1.100" stroke-dasharray="2.500 1.500"/><rect x="1700.500" y="106" width="9.500" height="9.500" fill="#5fc88a"/><rect x="1704" y="102.500" width="10" height="10" fill="#7ed8a0"/><path d="M1710.500 108.500v11l2.600-2.600 2 4.300 1.700-.8-2-4.300h3.700z" fill="#f4f4f4"/>
<rect x="1701" y="131" width="14.500" height="19.500" rx="1" fill="#d4d4d4"/><rect x="1703" y="133" width="10.500" height="3.500" fill="#666"/><rect x="1703.0" y="138.5" width="2.800" height="2.600" fill="#666"/><rect x="1703.0" y="142.2" width="2.800" height="2.600" fill="#666"/><rect x="1703.0" y="145.9" width="2.800" height="2.600" fill="#666"/><rect x="1706.8" y="138.5" width="2.800" height="2.600" fill="#666"/><rect x="1706.8" y="142.2" width="2.800" height="2.600" fill="#666"/><rect x="1706.8" y="145.9" width="2.800" height="2.600" fill="#666"/><rect x="1710.6" y="138.5" width="2.800" height="2.600" fill="#666"/><rect x="1710.6" y="142.2" width="2.800" height="2.600" fill="#666"/><rect x="1710.6" y="145.9" width="2.800" height="2.600" fill="#666"/>
<rect x="1745.800" y="71.600" width="28.200" height="31.400" fill="#dcac6c"/><rect x="1752.800" y="69.500" width="14" height="3.500" rx="1" fill="#f4f4f4"/><rect x="1756" y="68" width="7.500" height="3" rx="1.300" fill="#f4f4f4"/><path d="M1755 80.200h16l7.200 7.200v20.600h-23.200z" fill="#dadada" stroke="#3b4453" stroke-width="1.200"/><path d="M1771 80.200v7.200h7.200z" fill="#f4f4f4"/>
<rect x="1798" y="70" width="15" height="17.500" fill="#cfcfcf"/><path d="M1800 74h9M1800 77.500h9M1800 81h6" stroke="#888" stroke-width="1"/><path d="M1806.500 77l7.500 9.500M1817.500 78l-8 8.500" stroke="#f4f4f4" stroke-width="1.400"/><circle cx="1808.500" cy="88" r="1.900" fill="none" stroke="#f4f4f4" stroke-width="1.200"/><circle cx="1815.500" cy="88" r="1.900" fill="none" stroke="#f4f4f4" stroke-width="1.200"/>
<path d="M1800 101h9v16h-9z" fill="#d4d4d4"/><path d="M1804 104.500h7.500l4.500 4.500v12h-12z" fill="#dcdcdc" stroke="#3b4453" stroke-width=".8"/><path d="M1811.500 104.500v4.500h4.500z" fill="#f8f8f8"/>
<path d="M1847 72h17v13h23v17h-40z" fill="#dcdcdc"/>
<g shape-rendering="crispEdges" stroke="#1a1a1a" stroke-width="1" fill="none"><path d="M323.5 220V961M1425.5 220V961"/><path d="M327.5 961V238.5H1421.5V961"/><path d="M350.5 961V242.5H1416.5V961"/><path d="M433 816.5H1368"/></g>
<path d="M185.500 223V961M1564.500 223V961" stroke="#909090" stroke-width="1.150" stroke-dasharray="4.500 3.050" fill="none"/>
<g stroke="#1d4ff0" stroke-width="1.2" fill="none"><path d="M13.3 839V946.3H75.6Z"/><path d="M15.2 868.1L22.5 875.4L29.5 868.1M22.5 875.4V882.5"/><path d="M13.3 937.4H22.6V946.3"/><path d="M50.2 930.1L65 944.6M65 929.7L50.2 944.6"/></g>
<g stroke="#111" stroke-width="1" fill="none" shape-rendering="crispEdges"><path d="M1679.5 626V663M1679.5 685V722M1631 674.5H1668M1691 674.5H1728"/><rect x="1668.5" y="663.5" width="22" height="22"/></g>
<g><rect x="1845.500" y="238.700" width="14" height="4.600" fill="#f0f0f0" stroke="#34343e" stroke-width="1.200"/><rect x="1873.800" y="230.700" width="10.600" height="11.200" fill="#f4f4f4" stroke="#34343e" stroke-width="1.200"/><rect x="1870.500" y="233.600" width="11.300" height="10.800" fill="#f4f4f4" stroke="#34343e" stroke-width="1.200"/><rect x="1874.200" y="237" width="4.200" height="4.200" fill="#8b8b8b" stroke="#34343e" stroke-width="1"/><path d="M1896 232h4.600l1.400 3 1.400-3h4.600l-3.700 5.600 3.700 5.600h-4.600l-1.400-3-1.400 3h-4.600l3.700-5.600z" fill="#f6f6f6" stroke="#34343e" stroke-width="1.200" stroke-linejoin="round"/></g>
<g><rect x="1876" y="504" width="42" height="162" rx="4" fill="#a0a0a0" stroke="#6c6c6c" stroke-width="1.6"/><path d="M1878 517.500h38M1880 561.500h34" stroke="#969696" stroke-width="1"/><circle cx="1909.800" cy="511.200" r="3.800" fill="#a8a8a8" stroke="#b4b4b4" stroke-width="1"/><path d="M1907.800 509.200l4 4m0-4l-4 4" stroke="#c4c4c4" stroke-width="1.200"/><circle cx="1909.800" cy="658" r="3.800" fill="#a8a8a8" stroke="#b0b0b0" stroke-width="1"/><path d="M1907.500 658h4.600" stroke="#b8b8b8" stroke-width="1"/><path d="M1893 528.500h7a5.400 5.400 0 0 1 5.400 5.400v6a12 12 0 1 1-12.400-11.400z" fill="none" stroke="#b0b0b0" stroke-width="2"/><circle cx="1893.100" cy="539.900" r="5.600" fill="none" stroke="#b0b0b0" stroke-width="2"/><path d="M1888 588c-2.500-4-5-7.500-5.500-9.500c0-1.500 1.800-2 3-1l4 4.500l-2-11c-.3-2.300 2.500-2.800 3.200-.5l2 8l.2-10c0-2.400 3.200-2.400 3.300 0l.5 10l2-8.500c.6-2.300 3.400-1.700 3.100.6l-1.300 9.500l2.800-5c1-1.900 3.300-.9 2.700 1.100l-3 10c-1.200 3.800-2.500 6-4 8c-3 1.200-7 1.200-10-.500z" fill="none" stroke="#b0b0b0" stroke-width="1.500" stroke-linejoin="round"/><path d="M1882.500 603l17 17M1901.500 603l-19 18.500M1882.500 603h5M1882.500 603v5M1901.500 603h-5M1901.500 603v5M1882.500 621.500h5M1882.500 621.500v-5" stroke="#b0b0b0" stroke-width="1.600" fill="none"/><circle cx="1902" cy="621" r="5.200" fill="#a4a4a4" stroke="#b0b0b0" stroke-width="1.800"/><path d="M1906 625.200l5 4.800" stroke="#b0b0b0" stroke-width="2.800" stroke-linecap="round"/><path d="M1894.300 638.800h6l-3 3.200z" fill="#969696"/></g>
<rect x="455.8" y="853.5" width="311.0" height="18" rx="2" fill="#dcdcdc"/>
<rect x="455.8" y="878.5" width="185.0" height="18" rx="2" fill="#dcdcdc"/>
<rect x="455.8" y="903.5" width="356.0" height="18" rx="2" fill="#dcdcdc"/>
<path d="M379 958.500V929.500a2.500 2.500 0 0 1 2.500-2.500H1538.500a2.500 2.500 0 0 1 2.500 2.500V958.500a2.500 2.500 0 0 1-2.500 2.500H381.500a2.500 2.500 0 0 1-2.500-2.500Z" fill="#6c727e"/>
<path d="M451 928H1538.500a1.500 1.500 0 0 1 1.500 1.500V958.500a1.500 1.500 0 0 1-1.500 1.500H451a2 2 0 0 1-2-2V930a2 2 0 0 1 2-2Z" fill="#ffffff"/>
<g stroke="#d0d0d0" stroke-width="1" fill="none" shape-rendering="crispEdges"><path d="M1246.5 960V940.5H1416M1246.5 954.5H1416M1416.5 928V960M1421.5 928V960M1425.5 928V960"/></g>
<g fill="#f4f4f4"><rect x="384" y="933.0" width="2" height="2"/><rect x="388" y="933.0" width="2" height="2"/><rect x="384" y="936.9" width="2" height="2"/><rect x="388" y="936.9" width="2" height="2"/><rect x="384" y="940.8" width="2" height="2"/><rect x="388" y="940.8" width="2" height="2"/><rect x="384" y="944.7" width="2" height="2"/><rect x="388" y="944.7" width="2" height="2"/><rect x="384" y="948.6" width="2" height="2"/><rect x="388" y="948.6" width="2" height="2"/><rect x="384" y="952.5" width="2" height="2"/><rect x="388" y="952.5" width="2" height="2"/></g>
<path d="M398.200 938.300l9.800 9.800M408 938.300l-9.800 9.800" stroke="#ffffff" stroke-width="2.400"/>
<path d="M425.200 950.600L436 940" stroke="#ffffff" stroke-width="2.900" stroke-linecap="round"/><path d="M441.900 937.300A3.300 3.300 0 1 1 438.900 934.300" fill="none" stroke="#ffffff" stroke-width="2.900"/>
<rect x="454.700" y="936.600" width="18.600" height="14" fill="#f6f6f6" stroke="#8c8c8c" stroke-width="1"/><rect x="454.200" y="936.100" width="19.600" height="3.800" fill="#909090"/><rect x="456" y="937.200" width="1.300" height="1.300" fill="#f4f4f4"/><path d="M457 943l2.500 1.800-2.500 1.800M460.500 948h3.500" stroke="#555" stroke-width="1" fill="none"/>
<path d="M476.3 942.0H485.5L480.9 947.0Z" fill="#707070"/>
<path d="M1524.200 947h9.600l-4.800-5z" fill="#9a9a9a"/>
<g fill="none" stroke="#181818" stroke-width="1.12" stroke-linejoin="round" stroke-linecap="round"><path d="M431.3 342.8 C435.7 340.0 446.6 338.2 460.7 336.9 C476.3 335.3 504.5 334.1 551.4 333.5 C598.3 332.8 645.3 332.8 673.4 333.8 L695.0 336.1M457.6 338.5 C473.2 337.2 520.1 335.6 551.4 335.3 C598.3 334.9 645.3 334.7 670.3 335.6 L695.0 338.8M495.1 336.7 C535.8 336.1 598.3 335.6 660.9 336.3M472.7 338.5 L476.3 329.4 L483.4 329.4 L493.9 334.6M431.3 342.8 C431.9 344.7 433.5 345.7 436.0 345.5 L447.4 346.3 L464.6 353.3M433.8 343.6 C441.9 340.8 451.3 343.9 466.2 352.5M468.5 337.8 L466.2 352.5M447.4 346.8 L420.8 386.2M459.4 354.9 L440.4 383.4M460.4 357.2 L445.4 382.6M464.6 353.3 C473.2 350.2 479.5 347.8 487.3 347.4 L571.8 344.7 C576.4 343.9 579.6 340.8 585.1 340.3 L654.7 340.8 L695.0 343.2M571.8 345.7 L585.1 344.7 L647.6 344.7 L667.2 345.5 L695.0 347.1M475.6 353.3 L528.0 350.7 Q533.0 351.3 530.3 356.0 L513.9 372.1 Q510.0 375.7 504.5 376.0 L463.8 378.4 Q458.8 377.6 461.5 373.2 L470.4 359.6 Q472.7 354.1 475.6 353.3 ZM420.0 387.3 C441.9 383.8 488.9 379.9 536.6 378.0 L549.9 378.4 C557.7 380.7 567.1 387.7 579.6 389.8 L648.4 392.0 L695.0 394.8M420.8 388.5 C441.9 385.4 488.9 381.5 536.6 379.4 L545.2 380.1 C553.0 382.3 565.5 389.3 578.0 391.2 L648.4 393.2 L695.0 396.3M574.9 344.7 L537.3 378.0M585.1 345.5 L550.6 378.0M647.2 344.7 L650.3 391.6M654.7 341.3 C657.8 369.7 660.9 393.2 662.8 424.5 C663.3 440.1 661.7 463.6 659.4 481.0M665.3 345.5 L672.6 392.4M536.6 378.4 C534.2 393.2 534.2 415.1 537.3 431.5M428.6 394.8 L457.6 393.2 L476.3 393.7 Q480.2 394.8 477.1 397.1 L443.5 412.0 L429.4 413.2 C427.8 407.3 427.5 401.0 428.6 394.8M428.6 394.8 C421.6 395.1 416.9 396.0 415.3 398.7 C416.1 402.6 416.9 404.5 426.3 406.5 L428.6 408.9M420.0 387.7 C415.3 390.1 413.8 393.2 413.0 397.9 L410.6 405.7 L411.4 408.5 L419.2 408.5 C416.9 416.7 415.0 427.6 415.3 433.9 L416.9 444.8 L414.6 455.8 L410.6 457.0 L406.7 457.7M428.6 408.9 C428.6 424.5 427.8 433.9 416.9 444.8M443.5 412.0 L463.8 432.3 Q470.1 437.0 479.5 437.8 L496.7 441.4M483.4 395.6 L531.9 397.1M538.1 397.1 L596.8 400.7M418.5 446.9 L477.9 449.2M484.6 399.5 L498.6 399.5 Q502.9 399.5 502.9 403.8 L502.9 413.9 Q502.9 418.2 498.6 418.2 L484.6 418.2 Q480.2 418.2 480.2 413.9 L480.2 403.8 Q480.2 399.5 484.6 399.5 ZM547.5 410.4 Q548.3 407.6 556.1 407.6 L579.6 409.2 Q586.1 410.4 585.1 412.8 Q582.7 414.8 574.9 414.3 L553.0 413.9 Q547.5 413.2 547.5 410.4 ZM553.0 412.3 L582.7 413.5M560.5 407.6 Q567.5 400.7 574.9 408.5M559.2 414.5 Q567.1 423.2 575.2 414.8M695.0 336.1 C711.3 338.5 722.2 341.9 731.6 346.3 C750.4 354.9 773.9 371.3 798.9 388.2M695.0 339.4 C708.2 341.3 717.5 343.9 726.9 347.8 C745.7 356.5 770.7 373.7 789.5 386.2 L798.9 388.5M695.0 343.5 C706.6 345.3 717.5 348.6 730.1 354.1 C745.7 361.9 764.5 376.0 777.0 385.4 L786.4 385.4M695.0 347.8 C708.2 350.2 722.2 355.4 734.7 361.9 C745.7 368.2 753.5 374.4 762.9 381.5M748.8 382.3 Q750.1 376.3 759.8 376.0 Q769.5 376.8 773.9 386.2 L775.4 395.6 L751.2 395.6 Q746.9 390.1 748.8 382.3 ZM749.6 384.6 L773.9 388.0M748.8 387.7 L769.9 390.9 L773.9 390.1M695.0 394.8 L726.9 397.1 L750.4 396.3 L773.9 396.3M695.0 396.3 L726.9 398.4 L773.9 397.4M775.4 387.3 C781.7 394.8 784.0 408.9 784.0 421.4 C784.0 440.1 781.7 455.8 780.1 465.2M798.9 388.5 L813.0 389.8 C836.4 391.6 875.5 397.1 914.6 404.2 C930.3 407.3 939.7 410.4 944.4 415.1M813.0 390.9 L859.9 400.2 L916.2 407.6M798.9 388.5 L820.8 397.9 Q830.2 402.1 841.1 402.9 L883.3 406.8 L930.3 413.9 L944.4 415.9M795.8 406.0 L863.0 407.3M861.4 405.4 L899.0 421.4 Q911.5 426.4 920.9 426.8 L938.1 422.1 L927.1 415.1M922.5 423.7 L935.0 422.9M921.7 426.8 L935.0 427.9M900.6 422.9 L870.1 444.0M944.4 415.1 L949.4 419.0 L952.2 430.8M935.0 415.1 L945.9 415.1 L951.4 424.5M936.5 417.5 L946.9 418.2M939.7 420.6 L948.4 422.9M952.2 424.5 L954.0 440.1 L953.0 448.0M930.3 415.1 L945.9 430.8 L951.4 440.1 L950.6 448.0 L949.0 451.1M920.1 443.6 L933.4 443.3 L945.9 448.0 L950.6 449.8M919.3 444.5 Q913.8 457.3 914.6 469.1 Q917.8 473.8 922.5 472.2 Q933.4 462.8 937.3 451.1 L924.0 446.7M921.7 448.0 Q917.0 458.1 917.8 467.5 Q920.1 470.6 923.2 469.1 Q930.3 461.3 933.4 451.4 L924.0 448.7M920.1 448.0 Q917.0 453.4 920.1 458.9 Q923.2 453.4 920.1 448.0 ZM666.7 414.3 Q667.5 411.5 675.3 411.5 L698.8 413.1 Q705.3 414.3 704.2 416.7 Q701.9 418.7 694.1 418.2 L672.2 417.8 Q666.7 417.1 666.7 414.3 ZM672.2 416.2 L701.9 417.5M679.7 411.5 Q686.7 404.6 694.1 412.5M678.4 418.4 Q686.3 427.2 694.4 418.7M468.5 488.8 L470.1 483.4 C474.8 463.8 482.6 448.2 492.0 439.6 C501.4 432.5 513.9 430.6 524.8 430.6 C545.2 430.6 563.9 440.3 573.3 456.0 C579.6 466.9 581.9 474.7 581.9 488.8M472.4 505.2 L470.1 495.1 L471.6 485.7 C477.9 465.4 484.2 451.3 495.1 441.9 C504.5 435.6 515.4 435.3 524.8 435.3 C543.6 435.3 559.2 443.5 568.6 459.1 C574.9 468.5 576.4 477.9 576.4 488.8 L577.2 499.0M468.5 488.8 L468.5 495.1 L472.4 505.2 L474.8 493.5 L479.5 481.8M479.5 481.8 L484.9 461.5M481.3 481.8 L486.0 461.5M479.5 479.4 L484.2 477.9M568.6 477.9 L576.4 477.9M406.7 457.5 L405.9 466.9 L409.1 479.4 L423.2 480.2 L426.3 481.8 L427.1 484.9 L432.5 488.4 L440.4 483.8 L468.5 486.5M409.1 466.1 L418.5 466.6 L428.6 466.6 L431.3 474.0 L423.2 474.7 L415.3 470.8 L407.5 470.4M407.5 471.6 L414.6 472.1 L422.4 476.0 L431.3 475.1M581.9 481.8 L695.0 481.8M577.2 491.2 L589.0 488.0 L614.0 486.5 L695.0 486.0M589.0 488.8 Q592.1 493.5 598.3 494.3 L695.0 493.5M577.2 499.0 L695.0 499.0M570.2 506.8 L595.2 506.8 L598.3 508.4 L603.0 506.0 L695.0 504.5M784.0 487.3 C787.9 466.9 794.2 448.2 805.1 438.8 C814.5 431.7 827.0 430.9 838.0 430.9 C856.8 431.3 872.4 437.2 883.3 451.3 C892.7 463.8 896.6 476.3 896.6 488.0M788.7 488.8 C792.6 470.1 798.9 451.3 809.8 443.5 C817.7 437.2 828.6 436.1 838.0 436.1 C855.2 436.4 869.3 441.9 878.7 454.4 C888.0 466.9 891.2 477.9 891.5 488.8M891.5 488.8 L896.6 488.0 L917.8 488.0M883.3 486.5 L891.5 486.5M883.3 506.8 L888.0 505.2 L899.0 496.6 L909.9 495.1 L917.0 488.8 L920.9 488.8 L921.7 494.3M953.0 448.0 L953.7 463.8 L952.2 473.2 L936.5 485.7 L928.7 487.3M780.1 465.2 L779.3 471.6 Q777.3 481.0 768.4 481.8 L695.0 481.8M768.4 481.8 L768.4 486.5 L783.2 488.8 L787.9 490.4M695.0 486.0 L767.6 486.5M695.0 493.5 L758.2 493.5 Q767.6 492.7 770.7 488.8M695.0 499.0 L784.8 500.1 L787.1 490.4M784.8 505.2 L788.7 505.2 L787.9 490.4M695.0 504.6 L695.6 504.5 L701.1 500.6M712.1 500.6 L716.0 502.1 L722.2 501.7 L725.4 500.1M744.1 500.6 L745.7 502.1 L752.7 502.1 L753.5 500.6M789.5 486.5 L795.8 486.5M790.3 495.1 L795.0 495.1"/><circle cx="526.0" cy="494" r="44.7"/><g stroke="none"><circle cx="526.0" cy="494" r="28.7" fill="#262626"/><circle cx="526.0" cy="494" r="23.4" fill="#fff"/></g><g fill="none"><circle cx="526.0" cy="494" r="27.2" stroke="#c8c8c8" stroke-width=".5"/><circle cx="526.0" cy="494" r="25.4" stroke="#bcbcbc" stroke-width=".5"/><path d="M532.0 493.3L551.5 490.9M529.6 498.8L541.5 514.5M523.7 499.5L516.0 517.7M520.0 494.7L500.5 497.1M522.4 489.2L510.5 473.5M528.3 488.5L536.0 470.3" stroke="#262626" stroke-width="7.6" stroke-linecap="butt"/><path d="M536.8 491.4L553.5 489.4M537.1 493.9L553.8 491.8M533.6 502.0L543.8 515.5M531.6 503.5L541.8 517.0M522.9 504.6L516.2 520.2M520.6 503.6L513.9 519.2M515.2 496.6L498.5 498.6M514.9 494.1L498.2 496.2M518.4 486.0L508.2 472.5M520.4 484.5L510.2 471.0M529.1 483.4L535.8 467.8M531.4 484.4L538.1 468.8" stroke="#d0d0d0" stroke-width=".55" stroke-linecap="butt"/><path d="M547.2 498.5A21.7 21.7 0 0 1 544.0 506.1L539.8 499.9ZM532.7 514.6A21.7 21.7 0 0 1 524.5 515.6L527.8 508.9ZM511.5 510.1A21.7 21.7 0 0 1 506.5 503.5L514.0 503.0ZM504.8 489.5A21.7 21.7 0 0 1 508.0 481.9L512.2 488.1ZM519.3 473.4A21.7 21.7 0 0 1 527.5 472.4L524.2 479.1ZM540.5 477.9A21.7 21.7 0 0 1 545.5 484.5L538.0 485.0Z" stroke="#262626" stroke-width=".8"/><circle cx="526.0" cy="494" r="10.3" stroke="none" fill="#fff"/><circle cx="534.0" cy="493.0" r="2.5" stroke="none" fill="#262626"/><circle cx="534.0" cy="493.0" r=".7" stroke="none" fill="#ccc"/><circle cx="530.9" cy="500.5" r="2.5" stroke="none" fill="#262626"/><circle cx="530.9" cy="500.5" r=".7" stroke="none" fill="#ccc"/><circle cx="522.8" cy="501.5" r="2.5" stroke="none" fill="#262626"/><circle cx="522.8" cy="501.5" r=".7" stroke="none" fill="#ccc"/><circle cx="518.0" cy="495.0" r="2.5" stroke="none" fill="#262626"/><circle cx="518.0" cy="495.0" r=".7" stroke="none" fill="#ccc"/><circle cx="521.1" cy="487.5" r="2.5" stroke="none" fill="#262626"/><circle cx="521.1" cy="487.5" r=".7" stroke="none" fill="#ccc"/><circle cx="529.2" cy="486.5" r="2.5" stroke="none" fill="#262626"/><circle cx="529.2" cy="486.5" r=".7" stroke="none" fill="#ccc"/><ellipse cx="526.0" cy="494" rx="3.4" ry="2.8" fill="#262626" stroke="none"/></g><circle cx="839.6" cy="494" r="44.7"/><g stroke="none"><circle cx="839.6" cy="494" r="28.7" fill="#262626"/><circle cx="839.6" cy="494" r="23.4" fill="#fff"/></g><g fill="none"><circle cx="839.6" cy="494" r="27.2" stroke="#c8c8c8" stroke-width=".5"/><circle cx="839.6" cy="494" r="25.4" stroke="#bcbcbc" stroke-width=".5"/><path d="M845.6 493.3L865.1 490.9M843.2 498.8L855.1 514.5M837.3 499.5L829.6 517.7M833.6 494.7L814.1 497.1M836.0 489.2L824.1 473.5M841.9 488.5L849.6 470.3" stroke="#262626" stroke-width="7.6" stroke-linecap="butt"/><path d="M850.4 491.4L867.1 489.4M850.7 493.9L867.4 491.8M847.2 502.0L857.4 515.5M845.2 503.5L855.4 517.0M836.5 504.6L829.8 520.2M834.2 503.6L827.5 519.2M828.8 496.6L812.1 498.6M828.5 494.1L811.8 496.2M832.0 486.0L821.8 472.5M834.0 484.5L823.8 471.0M842.7 483.4L849.4 467.8M845.0 484.4L851.7 468.8" stroke="#d0d0d0" stroke-width=".55" stroke-linecap="butt"/><path d="M860.8 498.5A21.7 21.7 0 0 1 857.6 506.1L853.4 499.9ZM846.3 514.6A21.7 21.7 0 0 1 838.1 515.6L841.4 508.9ZM825.1 510.1A21.7 21.7 0 0 1 820.1 503.5L827.6 503.0ZM818.4 489.5A21.7 21.7 0 0 1 821.6 481.9L825.8 488.1ZM832.9 473.4A21.7 21.7 0 0 1 841.1 472.4L837.8 479.1ZM854.1 477.9A21.7 21.7 0 0 1 859.1 484.5L851.6 485.0Z" stroke="#262626" stroke-width=".8"/><circle cx="839.6" cy="494" r="10.3" stroke="none" fill="#fff"/><circle cx="847.6" cy="493.0" r="2.5" stroke="none" fill="#262626"/><circle cx="847.6" cy="493.0" r=".7" stroke="none" fill="#ccc"/><circle cx="844.5" cy="500.5" r="2.5" stroke="none" fill="#262626"/><circle cx="844.5" cy="500.5" r=".7" stroke="none" fill="#ccc"/><circle cx="836.4" cy="501.5" r="2.5" stroke="none" fill="#262626"/><circle cx="836.4" cy="501.5" r=".7" stroke="none" fill="#ccc"/><circle cx="831.6" cy="495.0" r="2.5" stroke="none" fill="#262626"/><circle cx="831.6" cy="495.0" r=".7" stroke="none" fill="#ccc"/><circle cx="834.7" cy="487.5" r="2.5" stroke="none" fill="#262626"/><circle cx="834.7" cy="487.5" r=".7" stroke="none" fill="#ccc"/><circle cx="842.8" cy="486.5" r="2.5" stroke="none" fill="#262626"/><circle cx="842.8" cy="486.5" r=".7" stroke="none" fill="#ccc"/><ellipse cx="839.6" cy="494" rx="3.4" ry="2.8" fill="#262626" stroke="none"/></g></g>
<g fill="none" stroke="#181818" stroke-width="1.05" stroke-linejoin="round" stroke-linecap="round" transform="matrix(-1.069 0 0 1.069 1411.6 241.7)"><path d="M431.3 342.8 C435.7 340.0 446.6 338.2 460.7 336.9 C476.3 335.3 504.5 334.1 551.4 333.5 C598.3 332.8 645.3 332.8 673.4 333.8 L695.0 336.1M457.6 338.5 C473.2 337.2 520.1 335.6 551.4 335.3 C598.3 334.9 645.3 334.7 670.3 335.6 L695.0 338.8M495.1 336.7 C535.8 336.1 598.3 335.6 660.9 336.3M472.7 338.5 L476.3 329.4 L483.4 329.4 L493.9 334.6M431.3 342.8 C431.9 344.7 433.5 345.7 436.0 345.5 L447.4 346.3 L464.6 353.3M433.8 343.6 C441.9 340.8 451.3 343.9 466.2 352.5M468.5 337.8 L466.2 352.5M447.4 346.8 L420.8 386.2M459.4 354.9 L440.4 383.4M460.4 357.2 L445.4 382.6M464.6 353.3 C473.2 350.2 479.5 347.8 487.3 347.4 L571.8 344.7 C576.4 343.9 579.6 340.8 585.1 340.3 L654.7 340.8 L695.0 343.2M571.8 345.7 L585.1 344.7 L647.6 344.7 L667.2 345.5 L695.0 347.1M475.6 353.3 L528.0 350.7 Q533.0 351.3 530.3 356.0 L513.9 372.1 Q510.0 375.7 504.5 376.0 L463.8 378.4 Q458.8 377.6 461.5 373.2 L470.4 359.6 Q472.7 354.1 475.6 353.3 ZM420.0 387.3 C441.9 383.8 488.9 379.9 536.6 378.0 L549.9 378.4 C557.7 380.7 567.1 387.7 579.6 389.8 L648.4 392.0 L695.0 394.8M420.8 388.5 C441.9 385.4 488.9 381.5 536.6 379.4 L545.2 380.1 C553.0 382.3 565.5 389.3 578.0 391.2 L648.4 393.2 L695.0 396.3M574.9 344.7 L537.3 378.0M585.1 345.5 L550.6 378.0M647.2 344.7 L650.3 391.6M654.7 341.3 C657.8 369.7 660.9 393.2 662.8 424.5 C663.3 440.1 661.7 463.6 659.4 481.0M665.3 345.5 L672.6 392.4M536.6 378.4 C534.2 393.2 534.2 415.1 537.3 431.5M428.6 394.8 L457.6 393.2 L476.3 393.7 Q480.2 394.8 477.1 397.1 L443.5 412.0 L429.4 413.2 C427.8 407.3 427.5 401.0 428.6 394.8M428.6 394.8 C421.6 395.1 416.9 396.0 415.3 398.7 C416.1 402.6 416.9 404.5 426.3 406.5 L428.6 408.9M420.0 387.7 C415.3 390.1 413.8 393.2 413.0 397.9 L410.6 405.7 L411.4 408.5 L419.2 408.5 C416.9 416.7 415.0 427.6 415.3 433.9 L416.9 444.8 L414.6 455.8 L410.6 457.0 L406.7 457.7M428.6 408.9 C428.6 424.5 427.8 433.9 416.9 444.8M443.5 412.0 L463.8 432.3 Q470.1 437.0 479.5 437.8 L496.7 441.4M483.4 395.6 L531.9 397.1M538.1 397.1 L596.8 400.7M418.5 446.9 L477.9 449.2M484.6 399.5 L498.6 399.5 Q502.9 399.5 502.9 403.8 L502.9 413.9 Q502.9 418.2 498.6 418.2 L484.6 418.2 Q480.2 418.2 480.2 413.9 L480.2 403.8 Q480.2 399.5 484.6 399.5 ZM547.5 410.4 Q548.3 407.6 556.1 407.6 L579.6 409.2 Q586.1 410.4 585.1 412.8 Q582.7 414.8 574.9 414.3 L553.0 413.9 Q547.5 413.2 547.5 410.4 ZM553.0 412.3 L582.7 413.5M560.5 407.6 Q567.5 400.7 574.9 408.5M559.2 414.5 Q567.1 423.2 575.2 414.8M695.0 336.1 C711.3 338.5 722.2 341.9 731.6 346.3 C750.4 354.9 773.9 371.3 798.9 388.2M695.0 339.4 C708.2 341.3 717.5 343.9 726.9 347.8 C745.7 356.5 770.7 373.7 789.5 386.2 L798.9 388.5M695.0 343.5 C706.6 345.3 717.5 348.6 730.1 354.1 C745.7 361.9 764.5 376.0 777.0 385.4 L786.4 385.4M695.0 347.8 C708.2 350.2 722.2 355.4 734.7 361.9 C745.7 368.2 753.5 374.4 762.9 381.5M748.8 382.3 Q750.1 376.3 759.8 376.0 Q769.5 376.8 773.9 386.2 L775.4 395.6 L751.2 395.6 Q746.9 390.1 748.8 382.3 ZM749.6 384.6 L773.9 388.0M748.8 387.7 L769.9 390.9 L773.9 390.1M695.0 394.8 L726.9 397.1 L750.4 396.3 L773.9 396.3M695.0 396.3 L726.9 398.4 L773.9 397.4M775.4 387.3 C781.7 394.8 784.0 408.9 784.0 421.4 C784.0 440.1 781.7 455.8 780.1 465.2M798.9 388.5 L813.0 389.8 C836.4 391.6 875.5 397.1 914.6 404.2 C930.3 407.3 939.7 410.4 944.4 415.1M813.0 390.9 L859.9 400.2 L916.2 407.6M798.9 388.5 L820.8 397.9 Q830.2 402.1 841.1 402.9 L883.3 406.8 L930.3 413.9 L944.4 415.9M795.8 406.0 L863.0 407.3M861.4 405.4 L899.0 421.4 Q911.5 426.4 920.9 426.8 L938.1 422.1 L927.1 415.1M922.5 423.7 L935.0 422.9M921.7 426.8 L935.0 427.9M900.6 422.9 L870.1 444.0M944.4 415.1 L949.4 419.0 L952.2 430.8M935.0 415.1 L945.9 415.1 L951.4 424.5M936.5 417.5 L946.9 418.2M939.7 420.6 L948.4 422.9M952.2 424.5 L954.0 440.1 L953.0 448.0M930.3 415.1 L945.9 430.8 L951.4 440.1 L950.6 448.0 L949.0 451.1M920.1 443.6 L933.4 443.3 L945.9 448.0 L950.6 449.8M919.3 444.5 Q913.8 457.3 914.6 469.1 Q917.8 473.8 922.5 472.2 Q933.4 462.8 937.3 451.1 L924.0 446.7M921.7 448.0 Q917.0 458.1 917.8 467.5 Q920.1 470.6 923.2 469.1 Q930.3 461.3 933.4 451.4 L924.0 448.7M920.1 448.0 Q917.0 453.4 920.1 458.9 Q923.2 453.4 920.1 448.0 ZM666.7 414.3 Q667.5 411.5 675.3 411.5 L698.8 413.1 Q705.3 414.3 704.2 416.7 Q701.9 418.7 694.1 418.2 L672.2 417.8 Q666.7 417.1 666.7 414.3 ZM672.2 416.2 L701.9 417.5M679.7 411.5 Q686.7 404.6 694.1 412.5M678.4 418.4 Q686.3 427.2 694.4 418.7M468.5 488.8 L470.1 483.4 C474.8 463.8 482.6 448.2 492.0 439.6 C501.4 432.5 513.9 430.6 524.8 430.6 C545.2 430.6 563.9 440.3 573.3 456.0 C579.6 466.9 581.9 474.7 581.9 488.8M472.4 505.2 L470.1 495.1 L471.6 485.7 C477.9 465.4 484.2 451.3 495.1 441.9 C504.5 435.6 515.4 435.3 524.8 435.3 C543.6 435.3 559.2 443.5 568.6 459.1 C574.9 468.5 576.4 477.9 576.4 488.8 L577.2 499.0M468.5 488.8 L468.5 495.1 L472.4 505.2 L474.8 493.5 L479.5 481.8M479.5 481.8 L484.9 461.5M481.3 481.8 L486.0 461.5M479.5 479.4 L484.2 477.9M568.6 477.9 L576.4 477.9M406.7 457.5 L405.9 466.9 L409.1 479.4 L423.2 480.2 L426.3 481.8 L427.1 484.9 L432.5 488.4 L440.4 483.8 L468.5 486.5M409.1 466.1 L418.5 466.6 L428.6 466.6 L431.3 474.0 L423.2 474.7 L415.3 470.8 L407.5 470.4M407.5 471.6 L414.6 472.1 L422.4 476.0 L431.3 475.1M581.9 481.8 L695.0 481.8M577.2 491.2 L589.0 488.0 L614.0 486.5 L695.0 486.0M589.0 488.8 Q592.1 493.5 598.3 494.3 L695.0 493.5M577.2 499.0 L695.0 499.0M570.2 506.8 L595.2 506.8 L598.3 508.4 L603.0 506.0 L695.0 504.5M784.0 487.3 C787.9 466.9 794.2 448.2 805.1 438.8 C814.5 431.7 827.0 430.9 838.0 430.9 C856.8 431.3 872.4 437.2 883.3 451.3 C892.7 463.8 896.6 476.3 896.6 488.0M788.7 488.8 C792.6 470.1 798.9 451.3 809.8 443.5 C817.7 437.2 828.6 436.1 838.0 436.1 C855.2 436.4 869.3 441.9 878.7 454.4 C888.0 466.9 891.2 477.9 891.5 488.8M891.5 488.8 L896.6 488.0 L917.8 488.0M883.3 486.5 L891.5 486.5M883.3 506.8 L888.0 505.2 L899.0 496.6 L909.9 495.1 L917.0 488.8 L920.9 488.8 L921.7 494.3M953.0 448.0 L953.7 463.8 L952.2 473.2 L936.5 485.7 L928.7 487.3M780.1 465.2 L779.3 471.6 Q777.3 481.0 768.4 481.8 L695.0 481.8M768.4 481.8 L768.4 486.5 L783.2 488.8 L787.9 490.4M695.0 486.0 L767.6 486.5M695.0 493.5 L758.2 493.5 Q767.6 492.7 770.7 488.8M695.0 499.0 L784.8 500.1 L787.1 490.4M784.8 505.2 L788.7 505.2 L787.9 490.4M695.0 504.6 L695.6 504.5 L701.1 500.6M712.1 500.6 L716.0 502.1 L722.2 501.7 L725.4 500.1M744.1 500.6 L745.7 502.1 L752.7 502.1 L753.5 500.6M789.5 486.5 L795.8 486.5M790.3 495.1 L795.0 495.1"/><circle cx="526.0" cy="494" r="44.7"/><g stroke="none"><circle cx="526.0" cy="494" r="28.7" fill="#262626"/><circle cx="526.0" cy="494" r="23.4" fill="#fff"/></g><g fill="none"><circle cx="526.0" cy="494" r="27.2" stroke="#c8c8c8" stroke-width=".5"/><circle cx="526.0" cy="494" r="25.4" stroke="#bcbcbc" stroke-width=".5"/><path d="M532.0 493.3L551.5 490.9M529.6 498.8L541.5 514.5M523.7 499.5L516.0 517.7M520.0 494.7L500.5 497.1M522.4 489.2L510.5 473.5M528.3 488.5L536.0 470.3" stroke="#262626" stroke-width="7.6" stroke-linecap="butt"/><path d="M536.8 491.4L553.5 489.4M537.1 493.9L553.8 491.8M533.6 502.0L543.8 515.5M531.6 503.5L541.8 517.0M522.9 504.6L516.2 520.2M520.6 503.6L513.9 519.2M515.2 496.6L498.5 498.6M514.9 494.1L498.2 496.2M518.4 486.0L508.2 472.5M520.4 484.5L510.2 471.0M529.1 483.4L535.8 467.8M531.4 484.4L538.1 468.8" stroke="#d0d0d0" stroke-width=".55" stroke-linecap="butt"/><path d="M547.2 498.5A21.7 21.7 0 0 1 544.0 506.1L539.8 499.9ZM532.7 514.6A21.7 21.7 0 0 1 524.5 515.6L527.8 508.9ZM511.5 510.1A21.7 21.7 0 0 1 506.5 503.5L514.0 503.0ZM504.8 489.5A21.7 21.7 0 0 1 508.0 481.9L512.2 488.1ZM519.3 473.4A21.7 21.7 0 0 1 527.5 472.4L524.2 479.1ZM540.5 477.9A21.7 21.7 0 0 1 545.5 484.5L538.0 485.0Z" stroke="#262626" stroke-width=".8"/><circle cx="526.0" cy="494" r="10.3" stroke="none" fill="#fff"/><circle cx="534.0" cy="493.0" r="2.5" stroke="none" fill="#262626"/><circle cx="534.0" cy="493.0" r=".7" stroke="none" fill="#ccc"/><circle cx="530.9" cy="500.5" r="2.5" stroke="none" fill="#262626"/><circle cx="530.9" cy="500.5" r=".7" stroke="none" fill="#ccc"/><circle cx="522.8" cy="501.5" r="2.5" stroke="none" fill="#262626"/><circle cx="522.8" cy="501.5" r=".7" stroke="none" fill="#ccc"/><circle cx="518.0" cy="495.0" r="2.5" stroke="none" fill="#262626"/><circle cx="518.0" cy="495.0" r=".7" stroke="none" fill="#ccc"/><circle cx="521.1" cy="487.5" r="2.5" stroke="none" fill="#262626"/><circle cx="521.1" cy="487.5" r=".7" stroke="none" fill="#ccc"/><circle cx="529.2" cy="486.5" r="2.5" stroke="none" fill="#262626"/><circle cx="529.2" cy="486.5" r=".7" stroke="none" fill="#ccc"/><ellipse cx="526.0" cy="494" rx="3.4" ry="2.8" fill="#262626" stroke="none"/></g><circle cx="839.6" cy="494" r="44.7"/><g stroke="none"><circle cx="839.6" cy="494" r="28.7" fill="#262626"/><circle cx="839.6" cy="494" r="23.4" fill="#fff"/></g><g fill="none"><circle cx="839.6" cy="494" r="27.2" stroke="#c8c8c8" stroke-width=".5"/><circle cx="839.6" cy="494" r="25.4" stroke="#bcbcbc" stroke-width=".5"/><path d="M845.6 493.3L865.1 490.9M843.2 498.8L855.1 514.5M837.3 499.5L829.6 517.7M833.6 494.7L814.1 497.1M836.0 489.2L824.1 473.5M841.9 488.5L849.6 470.3" stroke="#262626" stroke-width="7.6" stroke-linecap="butt"/><path d="M850.4 491.4L867.1 489.4M850.7 493.9L867.4 491.8M847.2 502.0L857.4 515.5M845.2 503.5L855.4 517.0M836.5 504.6L829.8 520.2M834.2 503.6L827.5 519.2M828.8 496.6L812.1 498.6M828.5 494.1L811.8 496.2M832.0 486.0L821.8 472.5M834.0 484.5L823.8 471.0M842.7 483.4L849.4 467.8M845.0 484.4L851.7 468.8" stroke="#d0d0d0" stroke-width=".55" stroke-linecap="butt"/><path d="M860.8 498.5A21.7 21.7 0 0 1 857.6 506.1L853.4 499.9ZM846.3 514.6A21.7 21.7 0 0 1 838.1 515.6L841.4 508.9ZM825.1 510.1A21.7 21.7 0 0 1 820.1 503.5L827.6 503.0ZM818.4 489.5A21.7 21.7 0 0 1 821.6 481.9L825.8 488.1ZM832.9 473.4A21.7 21.7 0 0 1 841.1 472.4L837.8 479.1ZM854.1 477.9A21.7 21.7 0 0 1 859.1 484.5L851.6 485.0Z" stroke="#262626" stroke-width=".8"/><circle cx="839.6" cy="494" r="10.3" stroke="none" fill="#fff"/><circle cx="847.6" cy="493.0" r="2.5" stroke="none" fill="#262626"/><circle cx="847.6" cy="493.0" r=".7" stroke="none" fill="#ccc"/><circle cx="844.5" cy="500.5" r="2.5" stroke="none" fill="#262626"/><circle cx="844.5" cy="500.5" r=".7" stroke="none" fill="#ccc"/><circle cx="836.4" cy="501.5" r="2.5" stroke="none" fill="#262626"/><circle cx="836.4" cy="501.5" r=".7" stroke="none" fill="#ccc"/><circle cx="831.6" cy="495.0" r="2.5" stroke="none" fill="#262626"/><circle cx="831.6" cy="495.0" r=".7" stroke="none" fill="#ccc"/><circle cx="834.7" cy="487.5" r="2.5" stroke="none" fill="#262626"/><circle cx="834.7" cy="487.5" r=".7" stroke="none" fill="#ccc"/><circle cx="842.8" cy="486.5" r="2.5" stroke="none" fill="#262626"/><circle cx="842.8" cy="486.5" r=".7" stroke="none" fill="#ccc"/><ellipse cx="839.6" cy="494" rx="3.4" ry="2.8" fill="#262626" stroke="none"/></g></g>
<g fill="none" stroke="#181818" stroke-width="1.12" stroke-linejoin="round" stroke-linecap="round"><path d="M1170.8 357.5 L1223.0 355.1M1221.7 355.1 L1223.0 351.4M1164.6 367.1 L1165.7 356.3 Q1167.7 353.8 1170.8 354.7 L1171.8 356.9 L1167.7 367.1M1165.7 360.9 L1170.8 360.6M1164.6 358.3 Q1159.5 358.9 1156.9 363.0 C1151.3 373.7 1143.1 391.2 1138.5 407.6 L1133.9 418.9 L1128.7 432.2 L1126.2 445.0M1157.7 363.5 C1152.1 374.8 1144.7 391.2 1140.0 406.6M1167.7 367.1 Q1161.6 368.1 1159.5 371.2 C1155.4 379.9 1150.3 394.3 1148.2 407.8M1167.7 367.1 L1223.0 365.6M1148.2 407.8 L1223.0 407.1M1143.1 404.5 L1147.7 404.3 L1148.2 407.8M1111.3 400.9 Q1113.3 396.3 1125.7 395.1 L1133.9 394.8 Q1136.9 395.3 1137.5 399.4 L1138.0 407.6 L1139.0 409.1 L1138.5 413.2 L1129.8 413.5 L1118.5 412.7 Q1110.3 410.7 1110.3 405.5 Q1110.3 402.5 1111.3 400.9 ZM1111.8 403.5 L1123.6 405.0 L1135.9 406.6M1111.3 406.1 L1129.8 408.6 L1129.8 413.5M1129.8 408.6 L1139.0 409.1M1132.8 413.5 L1126.9 421.7M1135.4 413.5 L1129.8 423.0M1125.7 423.5 Q1126.2 421.4 1129.8 422.0 L1129.2 426.1 L1126.9 426.1 ZM1126.9 426.1 L1125.7 437.3M1148.2 408.1 Q1141.0 410.7 1138.5 416.8 Q1136.9 420.9 1139.0 423.2 L1147.2 426.3 L1167.2 429.1 L1181.1 430.0 L1223.0 430.8M1164.6 409.6 Q1178.0 416.8 1181.6 429.7M1137.5 418.9 Q1138.2 423.8 1144.1 425.2 L1166.7 429.3M1135.9 425.0 Q1134.5 435.3 1139.0 439.9 L1153.4 442.5 L1170.8 444.3M1153.4 441.7 L1155.9 439.2 L1171.8 439.2M1167.4 429.3 L1172.6 437.7 L1180.2 449.0 Q1184.1 455.3 1184.8 461.9M1177.2 430.5 L1183.3 441.4 L1189.3 452.0 Q1191.1 456.8 1191.2 461.5M1179.0 432.0 L1213.9 432.0M1180.5 434.8 L1196.4 434.3 L1212.9 435.5M1184.1 441.4 L1211.8 441.4M1185.5 443.7 L1213.4 443.7M1187.9 448.3 L1223.0 448.3M1188.4 450.5 L1223.0 450.5M1189.5 452.0 L1223.0 452.0M1223.0 431.7 Q1212.9 432.0 1212.9 438.9 Q1213.4 446.1 1223.0 446.4M1223.0 433.0 Q1214.7 433.4 1214.7 438.9 Q1215.1 444.7 1223.0 445.0M1223.0 434.3 Q1219.0 434.8 1219.5 437.3 Q1220.6 439.4 1223.0 439.6M1223.0 434.1 Q1221.1 437.3 1221.6 445.0M1135.9 439.4 Q1130.8 443.5 1128.7 450.0M1125.7 445.0 C1125.1 460.4 1125.7 470.7 1126.7 478.9 L1127.2 535.3 Q1127.7 545.0 1134.9 545.3 L1149.3 545.3 Q1155.9 544.5 1156.2 537.3 L1156.2 510.7M1126.9 445.0 C1126.9 460.4 1127.7 475.8 1130.8 486.0 Q1133.9 496.3 1141.0 500.4M1131.3 449.9 Q1128.7 455.3 1128.7 463.5 C1129.2 475.8 1131.8 489.1 1136.9 496.3 Q1139.0 499.4 1142.1 499.7M1142.1 499.4 L1223.0 498.9M1140.0 457.3 L1159.5 458.1 L1177.0 460.9 L1182.1 461.4M1140.0 457.3 Q1138.2 457.8 1138.5 459.4 Q1135.9 470.7 1136.9 483.0 Q1140.0 488.1 1145.1 486.0 Q1155.4 477.8 1161.1 463.5 L1160.5 458.9M1140.5 460.4 Q1138.5 469.6 1139.5 476.3 Q1142.1 479.9 1145.1 477.3 Q1151.3 471.7 1153.9 461.9 L1141.0 460.4M1178.0 461.9 L1223.0 461.2M1179.0 464.0 L1223.0 463.5M1178.0 462.4 Q1182.1 472.7 1189.3 477.3 L1223.0 477.3M1180.0 463.7 Q1183.6 471.7 1190.3 475.8 L1223.0 475.8M1182.1 467.1 L1223.0 466.9M1184.1 470.1 L1223.0 469.9M1186.7 473.2 L1223.0 473.0M1163.6 496.3 L1173.9 468.6 Q1174.9 467.1 1178.0 467.1M1179.0 496.8 L1183.6 491.2 Q1185.2 489.9 1187.2 489.9 L1202.6 489.9 Q1205.2 490.1 1206.7 492.2 L1209.8 496.8M1144.1 499.9 Q1144.1 506.6 1146.2 509.1 L1148.2 510.2 L1172.9 510.2 L1176.4 506.6M1170.3 499.9 L1171.8 505.0 L1204.1 505.5 L1208.8 500.4M1156.2 521.4 L1162.6 521.4 L1163.6 518.4 L1171.8 518.1 L1175.9 515.8 L1182.1 515.3 L1185.2 516.8 L1197.5 516.3 L1201.6 518.4 L1223.0 518.1"/><circle cx="1144.9" cy="467.1" r="4.3"/></g><g fill="none" stroke="#181818" stroke-width="1.12" stroke-linejoin="round" stroke-linecap="round" transform="matrix(-1 0 0 1 2446 0)"><path d="M1170.8 357.5 L1223.0 355.1M1221.7 355.1 L1223.0 351.4M1164.6 367.1 L1165.7 356.3 Q1167.7 353.8 1170.8 354.7 L1171.8 356.9 L1167.7 367.1M1165.7 360.9 L1170.8 360.6M1164.6 358.3 Q1159.5 358.9 1156.9 363.0 C1151.3 373.7 1143.1 391.2 1138.5 407.6 L1133.9 418.9 L1128.7 432.2 L1126.2 445.0M1157.7 363.5 C1152.1 374.8 1144.7 391.2 1140.0 406.6M1167.7 367.1 Q1161.6 368.1 1159.5 371.2 C1155.4 379.9 1150.3 394.3 1148.2 407.8M1167.7 367.1 L1223.0 365.6M1148.2 407.8 L1223.0 407.1M1143.1 404.5 L1147.7 404.3 L1148.2 407.8M1111.3 400.9 Q1113.3 396.3 1125.7 395.1 L1133.9 394.8 Q1136.9 395.3 1137.5 399.4 L1138.0 407.6 L1139.0 409.1 L1138.5 413.2 L1129.8 413.5 L1118.5 412.7 Q1110.3 410.7 1110.3 405.5 Q1110.3 402.5 1111.3 400.9 ZM1111.8 403.5 L1123.6 405.0 L1135.9 406.6M1111.3 406.1 L1129.8 408.6 L1129.8 413.5M1129.8 408.6 L1139.0 409.1M1132.8 413.5 L1126.9 421.7M1135.4 413.5 L1129.8 423.0M1125.7 423.5 Q1126.2 421.4 1129.8 422.0 L1129.2 426.1 L1126.9 426.1 ZM1126.9 426.1 L1125.7 437.3M1148.2 408.1 Q1141.0 410.7 1138.5 416.8 Q1136.9 420.9 1139.0 423.2 L1147.2 426.3 L1167.2 429.1 L1181.1 430.0 L1223.0 430.8M1164.6 409.6 Q1178.0 416.8 1181.6 429.7M1137.5 418.9 Q1138.2 423.8 1144.1 425.2 L1166.7 429.3M1135.9 425.0 Q1134.5 435.3 1139.0 439.9 L1153.4 442.5 L1170.8 444.3M1153.4 441.7 L1155.9 439.2 L1171.8 439.2M1167.4 429.3 L1172.6 437.7 L1180.2 449.0 Q1184.1 455.3 1184.8 461.9M1177.2 430.5 L1183.3 441.4 L1189.3 452.0 Q1191.1 456.8 1191.2 461.5M1179.0 432.0 L1213.9 432.0M1180.5 434.8 L1196.4 434.3 L1212.9 435.5M1184.1 441.4 L1211.8 441.4M1185.5 443.7 L1213.4 443.7M1187.9 448.3 L1223.0 448.3M1188.4 450.5 L1223.0 450.5M1189.5 452.0 L1223.0 452.0M1223.0 431.7 Q1212.9 432.0 1212.9 438.9 Q1213.4 446.1 1223.0 446.4M1223.0 433.0 Q1214.7 433.4 1214.7 438.9 Q1215.1 444.7 1223.0 445.0M1223.0 434.3 Q1219.0 434.8 1219.5 437.3 Q1220.6 439.4 1223.0 439.6M1223.0 434.1 Q1221.1 437.3 1221.6 445.0M1135.9 439.4 Q1130.8 443.5 1128.7 450.0M1125.7 445.0 C1125.1 460.4 1125.7 470.7 1126.7 478.9 L1127.2 535.3 Q1127.7 545.0 1134.9 545.3 L1149.3 545.3 Q1155.9 544.5 1156.2 537.3 L1156.2 510.7M1126.9 445.0 C1126.9 460.4 1127.7 475.8 1130.8 486.0 Q1133.9 496.3 1141.0 500.4M1131.3 449.9 Q1128.7 455.3 1128.7 463.5 C1129.2 475.8 1131.8 489.1 1136.9 496.3 Q1139.0 499.4 1142.1 499.7M1142.1 499.4 L1223.0 498.9M1140.0 457.3 L1159.5 458.1 L1177.0 460.9 L1182.1 461.4M1140.0 457.3 Q1138.2 457.8 1138.5 459.4 Q1135.9 470.7 1136.9 483.0 Q1140.0 488.1 1145.1 486.0 Q1155.4 477.8 1161.1 463.5 L1160.5 458.9M1140.5 460.4 Q1138.5 469.6 1139.5 476.3 Q1142.1 479.9 1145.1 477.3 Q1151.3 471.7 1153.9 461.9 L1141.0 460.4M1178.0 461.9 L1223.0 461.2M1179.0 464.0 L1223.0 463.5M1178.0 462.4 Q1182.1 472.7 1189.3 477.3 L1223.0 477.3M1180.0 463.7 Q1183.6 471.7 1190.3 475.8 L1223.0 475.8M1182.1 467.1 L1223.0 466.9M1184.1 470.1 L1223.0 469.9M1186.7 473.2 L1223.0 473.0M1163.6 496.3 L1173.9 468.6 Q1174.9 467.1 1178.0 467.1M1179.0 496.8 L1183.6 491.2 Q1185.2 489.9 1187.2 489.9 L1202.6 489.9 Q1205.2 490.1 1206.7 492.2 L1209.8 496.8M1144.1 499.9 Q1144.1 506.6 1146.2 509.1 L1148.2 510.2 L1172.9 510.2 L1176.4 506.6M1170.3 499.9 L1171.8 505.0 L1204.1 505.5 L1208.8 500.4M1156.2 521.4 L1162.6 521.4 L1163.6 518.4 L1171.8 518.1 L1175.9 515.8 L1182.1 515.3 L1185.2 516.8 L1197.5 516.3 L1201.6 518.4 L1223.0 518.1"/><circle cx="1144.9" cy="467.1" r="4.3"/></g>
<g fill="none" stroke="#181818" stroke-width="1.12" stroke-linejoin="round" stroke-linecap="round"><path d="M1218.4 598.7 L1219.9 591.9 L1220.9 591.7M1162.6 597.9 L1172.7 596.4 L1220.9 595.0M1171.6 597.2 L1180.6 596.2 L1220.9 595.8M1153.0 598.1 Q1153.6 594.2 1158.1 594.5 Q1162.0 595.3 1162.6 598.7 L1161.5 601.5 L1155.8 601.3 Q1153.0 599.8 1153.0 598.1 ZM1152.5 598.7 Q1145.7 599.2 1142.9 603.7 L1126.0 646.5 L1122.1 655.5 L1114.8 664.5 Q1109.2 678.0 1108.1 689.2 L1106.9 700.0M1162.6 599.2 Q1168.2 604.3 1175.0 604.9 L1220.9 605.4M1163.7 602.4 L1170.5 599.2M1197.4 606.0 Q1201.9 608.8 1208.7 608.9 L1220.9 609.4M1205.3 607.1 L1220.9 607.1M1140.7 611.1 Q1143.5 602.6 1153.6 600.6 L1163.7 599.2M1142.3 614.4 Q1145.7 607.1 1158.1 606.7 L1197.4 606.0M1145.7 616.1 Q1150.2 612.5 1159.2 612.1 L1220.9 611.1M1143.5 618.4 C1139.0 628.5 1134.5 639.7 1132.2 651.0M1145.2 617.5 C1141.2 628.5 1139.0 639.7 1137.9 651.5M1125.5 647.0 Q1127.7 651.0 1134.5 651.5 L1220.9 653.2M1137.9 651.6 L1220.9 652.4M1137.9 653.9 L1220.9 654.3M1137.3 625.1 C1135.0 644.2 1134.5 666.7 1136.2 683.6 Q1136.7 694.8 1137.9 700.0M1114.8 662.8 Q1115.4 675.7 1117.6 681.3 L1119.9 682.2 L1134.5 682.2M1117.6 662.2 L1121.0 660.5 L1135.6 661.1M1135.6 661.1 L1175.0 664.5 L1181.1 668.4 L1171.6 671.8 L1145.7 674.6 Q1142.3 675.1 1140.7 678.0 L1137.9 681.3 L1134.5 682.2M1181.1 668.4 L1220.9 668.4M1142.3 677.4 L1220.9 677.4M1115.4 689.2 L1133.9 689.2M1137.3 689.2 L1172.7 689.2M1169.3 679.3 Q1172.7 691.5 1188.5 703.0M1110.3 671.8 Q1107.5 673.5 1107.5 675.1 L1109.2 678.0M1118.2 682.5 Q1113.7 689.2 1112.0 700.0M1220.9 656.0 Q1211.8 656.6 1211.8 661.7 Q1212.3 666.7 1220.9 667.3M1220.9 657.4 Q1214.1 657.7 1214.1 661.7 Q1214.5 665.6 1220.9 665.9M1220.9 658.3 Q1217.1 658.8 1217.5 661.1 Q1218.3 662.8 1220.9 663.0M1219.4 657.5 L1219.7 668.4M1106.9 700.0 C1105.8 716.9 1106.9 733.7 1109.2 754.0M1108.6 754.0 L1108.6 805.7 Q1109.2 814.7 1115.4 816.0 L1137.9 816.0 Q1142.9 814.7 1143.2 805.7 L1143.5 756.2M1112.0 700.0 Q1112.0 706.7 1109.2 709.0 C1108.1 722.5 1109.2 737.1 1112.0 749.5 Q1113.7 758.5 1113.1 760.2M1108.1 706.7 C1107.5 728.1 1109.7 745.0 1113.1 758.5 Q1114.2 760.7 1116.5 760.7 L1137.9 761.8 Q1140.1 761.3 1140.3 758.5 L1140.7 755.1M1109.2 719.7 Q1109.2 718.0 1112.0 717.8 L1142.3 717.8M1137.3 699.4 C1139.0 709.0 1144.6 720.2 1149.1 724.2 Q1152.5 727.0 1157.0 727.2 L1220.9 727.2M1139.0 699.4 C1141.2 709.0 1146.3 721.4 1150.8 725.6 Q1153.6 728.3 1158.1 729.2 L1220.9 729.2M1188.5 703.0 Q1193.0 704.7 1197.4 704.7 L1220.9 704.5M1118.7 740.5 L1122.1 739.4 L1143.5 739.4 L1142.9 741.8 L1134.5 747.2 Q1132.2 748.9 1127.7 748.9 L1122.1 748.4 Q1118.7 746.1 1118.7 740.5 ZM1121.0 741.4 L1140.1 741.0 L1133.4 745.5 L1124.4 746.1 Q1120.8 745.0 1121.0 741.4 ZM1145.7 739.9 L1148.0 739.4 L1220.9 739.1M1143.5 745.0 L1148.0 743.9 L1220.9 743.6M1142.9 741.8 Q1144.6 740.7 1145.7 739.9M1134.5 747.8 Q1141.2 746.1 1143.5 745.0M1141.2 752.9 Q1145.7 747.2 1152.5 746.3 L1220.9 746.1M1141.2 755.3 L1220.9 755.1M1121.0 758.5 Q1124.4 755.1 1130.0 754.5 L1140.7 754.5M1133.4 754.9 L1133.9 759.0 L1122.1 758.5M1110.3 760.2 Q1110.3 773.1 1111.4 778.7 L1114.2 781.2 L1139.0 781.2 Q1141.2 779.8 1141.8 776.5 L1143.5 756.2M1143.2 789.4 L1149.7 789.4 L1150.8 784.3 L1162.6 784.1 L1166.0 782.6 L1173.8 782.3 L1177.2 783.8 L1190.7 783.4 L1196.3 784.9 L1220.9 784.9"/><path d="M1093.4 652.1 Q1094.0 645.3 1107.5 642.5 L1117.6 641.8 Q1122.1 643.1 1121.5 651.0 Q1121.0 657.7 1115.4 662.2 L1105.2 662.8 Q1094.0 661.1 1093.4 652.1 ZM1096.2 653.2 Q1096.8 647.6 1107.5 644.8 L1116.5 644.0 Q1119.3 645.3 1118.7 651.0 Q1118.2 656.6 1114.2 660.5 L1105.2 660.9 Q1096.8 660.0 1096.2 653.2 ZM1321.2 652.6 Q1320.5 644.4 1322.6 642.7 Q1326.0 641.0 1330.1 641.3 L1342.4 643.7 Q1349.3 645.7 1351.3 649.2 Q1353.4 653.3 1352.0 656.7 Q1347.9 661.5 1341.1 662.2 L1327.4 663.4 Q1322.6 658.7 1321.2 652.6 ZM1325.5 652.6 Q1325.0 645.7 1326.4 644.0 Q1328.7 642.7 1332.2 643.1 L1341.8 645.2 Q1347.2 647.1 1348.6 649.8 Q1350.3 653.6 1348.9 656.4 Q1345.9 660.1 1340.4 660.7 L1328.7 661.6 Q1326.4 657.4 1325.5 652.6 Z"/></g><g fill="none" stroke="#181818" stroke-width="1.12" stroke-linejoin="round" stroke-linecap="round" transform="matrix(-1 0 0 1 2442 0)"><path d="M1218.4 598.7 L1219.9 591.9 L1220.9 591.7M1162.6 597.9 L1172.7 596.4 L1220.9 595.0M1171.6 597.2 L1180.6 596.2 L1220.9 595.8M1153.0 598.1 Q1153.6 594.2 1158.1 594.5 Q1162.0 595.3 1162.6 598.7 L1161.5 601.5 L1155.8 601.3 Q1153.0 599.8 1153.0 598.1 ZM1152.5 598.7 Q1145.7 599.2 1142.9 603.7 L1126.0 646.5 L1122.1 655.5 L1114.8 664.5 Q1109.2 678.0 1108.1 689.2 L1106.9 700.0M1162.6 599.2 Q1168.2 604.3 1175.0 604.9 L1220.9 605.4M1163.7 602.4 L1170.5 599.2M1197.4 606.0 Q1201.9 608.8 1208.7 608.9 L1220.9 609.4M1205.3 607.1 L1220.9 607.1M1140.7 611.1 Q1143.5 602.6 1153.6 600.6 L1163.7 599.2M1142.3 614.4 Q1145.7 607.1 1158.1 606.7 L1197.4 606.0M1145.7 616.1 Q1150.2 612.5 1159.2 612.1 L1220.9 611.1M1143.5 618.4 C1139.0 628.5 1134.5 639.7 1132.2 651.0M1145.2 617.5 C1141.2 628.5 1139.0 639.7 1137.9 651.5M1125.5 647.0 Q1127.7 651.0 1134.5 651.5 L1220.9 653.2M1137.9 651.6 L1220.9 652.4M1137.9 653.9 L1220.9 654.3M1137.3 625.1 C1135.0 644.2 1134.5 666.7 1136.2 683.6 Q1136.7 694.8 1137.9 700.0M1114.8 662.8 Q1115.4 675.7 1117.6 681.3 L1119.9 682.2 L1134.5 682.2M1117.6 662.2 L1121.0 660.5 L1135.6 661.1M1135.6 661.1 L1175.0 664.5 L1181.1 668.4 L1171.6 671.8 L1145.7 674.6 Q1142.3 675.1 1140.7 678.0 L1137.9 681.3 L1134.5 682.2M1181.1 668.4 L1220.9 668.4M1142.3 677.4 L1220.9 677.4M1115.4 689.2 L1133.9 689.2M1137.3 689.2 L1172.7 689.2M1169.3 679.3 Q1172.7 691.5 1188.5 703.0M1110.3 671.8 Q1107.5 673.5 1107.5 675.1 L1109.2 678.0M1118.2 682.5 Q1113.7 689.2 1112.0 700.0M1220.9 656.0 Q1211.8 656.6 1211.8 661.7 Q1212.3 666.7 1220.9 667.3M1220.9 657.4 Q1214.1 657.7 1214.1 661.7 Q1214.5 665.6 1220.9 665.9M1220.9 658.3 Q1217.1 658.8 1217.5 661.1 Q1218.3 662.8 1220.9 663.0M1219.4 657.5 L1219.7 668.4M1106.9 700.0 C1105.8 716.9 1106.9 733.7 1109.2 754.0M1108.6 754.0 L1108.6 805.7 Q1109.2 814.7 1115.4 816.0 L1137.9 816.0 Q1142.9 814.7 1143.2 805.7 L1143.5 756.2M1112.0 700.0 Q1112.0 706.7 1109.2 709.0 C1108.1 722.5 1109.2 737.1 1112.0 749.5 Q1113.7 758.5 1113.1 760.2M1108.1 706.7 C1107.5 728.1 1109.7 745.0 1113.1 758.5 Q1114.2 760.7 1116.5 760.7 L1137.9 761.8 Q1140.1 761.3 1140.3 758.5 L1140.7 755.1M1109.2 719.7 Q1109.2 718.0 1112.0 717.8 L1142.3 717.8M1137.3 699.4 C1139.0 709.0 1144.6 720.2 1149.1 724.2 Q1152.5 727.0 1157.0 727.2 L1220.9 727.2M1139.0 699.4 C1141.2 709.0 1146.3 721.4 1150.8 725.6 Q1153.6 728.3 1158.1 729.2 L1220.9 729.2M1188.5 703.0 Q1193.0 704.7 1197.4 704.7 L1220.9 704.5M1118.7 740.5 L1122.1 739.4 L1143.5 739.4 L1142.9 741.8 L1134.5 747.2 Q1132.2 748.9 1127.7 748.9 L1122.1 748.4 Q1118.7 746.1 1118.7 740.5 ZM1121.0 741.4 L1140.1 741.0 L1133.4 745.5 L1124.4 746.1 Q1120.8 745.0 1121.0 741.4 ZM1145.7 739.9 L1148.0 739.4 L1220.9 739.1M1143.5 745.0 L1148.0 743.9 L1220.9 743.6M1142.9 741.8 Q1144.6 740.7 1145.7 739.9M1134.5 747.8 Q1141.2 746.1 1143.5 745.0M1141.2 752.9 Q1145.7 747.2 1152.5 746.3 L1220.9 746.1M1141.2 755.3 L1220.9 755.1M1121.0 758.5 Q1124.4 755.1 1130.0 754.5 L1140.7 754.5M1133.4 754.9 L1133.9 759.0 L1122.1 758.5M1110.3 760.2 Q1110.3 773.1 1111.4 778.7 L1114.2 781.2 L1139.0 781.2 Q1141.2 779.8 1141.8 776.5 L1143.5 756.2M1143.2 789.4 L1149.7 789.4 L1150.8 784.3 L1162.6 784.1 L1166.0 782.6 L1173.8 782.3 L1177.2 783.8 L1190.7 783.4 L1196.3 784.9 L1220.9 784.9"/></g>
<path d="M5 961C13 962 15.500 967 17.500 973C19.500 980 22 983.500 30 983.500H77C84 983.500 87 978 87 972C87 966 84 961 80 961Z" fill="#323a48"/>
<path d="M184 961C176 961 173.500 966 173.500 972C173.500 978 176 983.500 184 983.500H240C247 983.500 250 980 252 974C254 967 256 962 263 961Z" fill="#323a48"/>
<path d="M78 961C86 962 88.500 968 90.500 974C92.500 980 95 983.500 102 983.500H158C165 983.500 167.500 980 169.500 974C171.500 967 174 962 181 961Z" fill="#3b4453"/>
<path d="M269.600 964H287.600C287 973 284 980 278 982.400H260.200C265 978 268 972 269.600 964Z" fill="#323a48"/>
<path d="M269.200 973.200h9.800M274.100 968.300v9.700" stroke="#aeb2ba" stroke-width="2.400"/>
<rect x="1281" y="988" width="52" height="30" fill="#3b4453"/>
<rect x="1337" y="988" width="28" height="30" fill="#5c8fc6"/>
<rect x="1367" y="988" width="130" height="30" fill="#3b4453"/>
<rect x="1499" y="988" width="79" height="30" fill="#3b4453"/>
<rect x="1529" y="988" width="28" height="30" fill="#5c8fc6"/>
<rect x="1579" y="988" width="30" height="30" fill="#3b4453"/>
<rect x="1612" y="988" width="90" height="30" fill="#3b4453"/>
<rect x="1705" y="988" width="50" height="30" fill="#3b4453"/>
<rect x="1756" y="988" width="30" height="30" fill="#3b4453"/>
<rect x="1789" y="988" width="30" height="30" fill="#3b4453"/>
<rect x="1822" y="988" width="34" height="30" fill="#3b4453"/>
<rect x="1859" y="988" width="60" height="30" fill="#3b4453"/>
<path d="M1340.800 999.500h9.400M1345.500 995v9.500" stroke="#fff" stroke-width="1.200"/><rect x="1348" y="1005.300" width="13.200" height="5" fill="#fff"/><rect x="1349" y="1006.300" width="1.800" height="3" fill="#5c8fc6"/>
<path d="M1372.500 993.500V1012.500H1392M1372.500 1007.500h6v5" stroke="#dcdcdc" stroke-width="1.100" fill="none"/>
<circle cx="1410.200" cy="1003.200" r="7.800" fill="none" stroke="#dcdcdc" stroke-width="1.300"/><path d="M1418 994.500l-8.500 8.700h12.500" stroke="#dcdcdc" stroke-width="1.300" fill="none"/>
<path d="M1431.7 999.8H1442.0L1436.8 1005.5Z" fill="#d8d8d8"/>
<path d="M1462.500 993v18" stroke="#37c85a" stroke-width="1.100"/><path d="M1454.500 994.500l15 15" stroke="#c85a5a" stroke-width="1.100"/><rect x="1460.300" y="1000" width="4" height="4" fill="#3b4453" stroke="#e0e0e0" stroke-width="1"/>
<path d="M1481.9 999.8H1491.8L1486.8 1005.5Z" fill="#d8d8d8"/>
<path d="M1503 1010h20M1504 1009.500l17.500-14.500" stroke="#dcdcdc" stroke-width="1.500" fill="none"/><rect x="1508.500" y="1000.500" width="4" height="4" fill="#dcdcdc"/>
<rect x="1538" y="997.500" width="14.500" height="14.500" fill="none" stroke="#fff" stroke-width="1.400"/><rect x="1534.500" y="994.500" width="5" height="5" fill="#5c8fc6" stroke="#fff" stroke-width="1.100"/>
<path d="M1563.2 999.8H1572.7L1568.0 1005.5Z" fill="#d8d8d8"/>
<path d="M1584 996.200h20M1584 1002.500h20M1584 1008.800h20" stroke="#dcdcdc" stroke-width="1.200"/><rect x="1584" y="995" width="9" height="3" fill="#dcdcdc"/><rect x="1584" y="1000.700" width="13" height="4" fill="#dcdcdc"/><rect x="1584" y="1006.500" width="7" height="5" fill="#dcdcdc"/>
<rect x="1617.500" y="993.500" width="19" height="19" fill="none" stroke="#dcdcdc" stroke-width="1.200" stroke-dasharray="3.500 2.500"/><rect x="1626" y="1001.500" width="8" height="8" fill="none" stroke="#dcdcdc" stroke-width="1.200"/><path d="M1618 994l7 7M1618 994h4.500M1618 994v4.500" stroke="#dcdcdc" stroke-width="1.300" fill="none"/>
<path d="M1655.3 993l3.500 9.500 6.500 9.500-6.500-3.500-3.500 1-3.500-1-6.500 3.500 6.500-9.500z" fill="#dcdcdc"/>
<circle cx="1664" cy="996.500" r="2.700" fill="none" stroke="#dcdcdc" stroke-width="1.100"/>
<path d="M1684.5 993l3.500 9.500 6.500 9.500-6.500-3.500-3.500 1-3.500-1-6.500 3.500 6.500-9.500z" fill="#dcdcdc"/>
<path d="M1694.500 993l-3.500 4.500h2.500l-2.500 4.500" stroke="#dcdcdc" stroke-width="1.200" fill="none"/>
<path d="M1729.76 1000.52L1729.76 1004.88L1726.72 1005.54L1726.76 1005.44L1728.44 1008.06L1725.36 1011.14L1722.74 1009.46L1722.84 1009.42L1722.18 1012.46L1717.82 1012.46L1717.16 1009.42L1717.26 1009.46L1714.64 1011.14L1711.56 1008.06L1713.24 1005.44L1713.28 1005.54L1710.24 1004.88L1710.24 1000.52L1713.28 999.86L1713.24 999.96L1711.56 997.34L1714.64 994.26L1717.26 995.94L1717.16 995.98L1717.82 992.94L1722.18 992.94L1722.84 995.98L1722.74 995.94L1725.36 994.26L1728.44 997.34L1726.76 999.96L1726.72 999.86Z" fill="#dcdcdc"/><circle cx="1720" cy="1002.7" r="3.6" fill="#3b4453"/>
<path d="M1740.0 999.5H1750.0L1745.0 1005.0Z" fill="#d8d8d8"/>
<path d="M1761 1002.700h19M1770.500 993v19.500" stroke="#f0f0f0" stroke-width="2.200"/>
<rect x="1794.500" y="994" width="6.500" height="6.500" fill="none" stroke="#dcdcdc" stroke-width="1.100"/><circle cx="1809.500" cy="1001.500" r="4" fill="none" stroke="#dcdcdc" stroke-width="1.100"/><path d="M1801.500 1005.500l4.500 7.500h-9z" fill="none" stroke="#dcdcdc" stroke-width="1.100"/>
<path d="M1826 994l4-3.500h14l4 4v11h-22z" fill="#3c74c4"/><path d="M1826 994h18l4 1" stroke="#6aa6ec" stroke-width="1" fill="none"/><path d="M1832 991v8M1828 995h8" stroke="#fff" stroke-width="1.200"/><circle cx="1832" cy="995" r="1.600" fill="#fff"/><path d="M1826 1004h10v8h-10z" fill="#f0b428"/><path d="M1835.500 1008l4.500 4.500 9-9.500" stroke="#32c050" stroke-width="2.800" fill="none"/>
<rect x="1864.500" y="996" width="19.500" height="14" fill="none" stroke="#dcdcdc" stroke-width="1.100"/><path d="M1867.500 1007l4.500-4M1867.500 1007v-3.500M1867.500 1007h3.500M1881 999l-4.500 4M1881 999v3.500M1881 999h-3.500" stroke="#dcdcdc" stroke-width="1.100" fill="none"/>
<path d="M1894 995h20M1894 1002.500h20M1894 1010h20" stroke="#f0f0f0" stroke-width="2.400"/>
</svg>
<span style="left:405.3px;top:5.9px;font:15.5px/15.5px 'Liberation Sans',sans-serif;color:#7cc0f4;letter-spacing:-0.87px;">Share</span>
<span style="left:637.0px;top:6.9px;font:15.5px/15.5px 'Liberation Sans',sans-serif;color:#e8e8e8;letter-spacing:-0.36px;">Autodesk AutoCAD 2022</span>
<span style="left:816.2px;top:6.9px;font:15.5px/15.5px 'Liberation Sans',sans-serif;color:#e8e8e8;letter-spacing:-0.41px;">Bản vẽ Cad Toyota Fortuner 2018.dwg</span>
<span style="left:1273.2px;top:6.1px;font:italic 14px/14px 'Liberation Sans',sans-serif;color:#b4b9c3;letter-spacing:-0.35px;">Type a keyword or phrase</span>
<span style="left:1555.6px;top:5.9px;font:15.5px/15.5px 'Liberation Sans',sans-serif;color:#e8e8e8;letter-spacing:-0.34px;">Sign In</span>
<span style="left:13.2px;top:38.9px;font:15.5px/15.5px 'Liberation Sans',sans-serif;color:#f4f4f4;letter-spacing:0.20px;">Home</span>
<span style="left:78.6px;top:38.9px;font:15.5px/15.5px 'Liberation Sans',sans-serif;color:#d4d4d4;letter-spacing:-0.19px;">Insert</span>
<span style="left:140.0px;top:38.9px;font:15.5px/15.5px 'Liberation Sans',sans-serif;color:#d4d4d4;letter-spacing:-0.08px;">Annotate</span>
<span style="left:225.0px;top:38.9px;font:15.5px/15.5px 'Liberation Sans',sans-serif;color:#d4d4d4;letter-spacing:-0.36px;">Parametric</span>
<span style="left:319.9px;top:38.9px;font:15.5px/15.5px 'Liberation Sans',sans-serif;color:#d4d4d4;letter-spacing:-0.43px;">View</span>
<span style="left:375.0px;top:38.9px;font:15.5px/15.5px 'Liberation Sans',sans-serif;color:#d4d4d4;letter-spacing:-0.17px;">Manage</span>
<span style="left:453.6px;top:38.9px;font:15.5px/15.5px 'Liberation Sans',sans-serif;color:#d4d4d4;">Output</span>
<span style="left:523.0px;top:38.9px;font:15.5px/15.5px 'Liberation Sans',sans-serif;color:#d4d4d4;letter-spacing:0.04px;">Collaborate</span>
<span style="left:625.0px;top:38.9px;font:15.5px/15.5px 'Liberation Sans',sans-serif;color:#d4d4d4;letter-spacing:-0.53px;">Express Tools</span>
<span style="left:736.7px;top:38.9px;font:15.5px/15.5px 'Liberation Sans',sans-serif;color:#f4f4f4;letter-spacing:-0.23px;">Layout</span>
<span style="left:112.5px;top:163.6px;font:15.5px/15.5px 'Liberation Sans',sans-serif;color:#e0e0e0;letter-spacing:-0.41px;">Draw</span>
<span style="left:402.0px;top:163.6px;font:15.5px/15.5px 'Liberation Sans',sans-serif;color:#e0e0e0;letter-spacing:0.40px;">Modify</span>
<span style="left:653.3px;top:163.6px;font:15.5px/15.5px 'Liberation Sans',sans-serif;color:#e0e0e0;letter-spacing:0.03px;">Annotation</span>
<span style="left:945.4px;top:163.6px;font:15.5px/15.5px 'Liberation Sans',sans-serif;color:#e0e0e0;letter-spacing:-0.94px;">Layers</span>
<span style="left:1167.4px;top:163.6px;font:15.5px/15.5px 'Liberation Sans',sans-serif;color:#e0e0e0;letter-spacing:-0.29px;">Block</span>
<span style="left:1332.9px;top:163.6px;font:15.5px/15.5px 'Liberation Sans',sans-serif;color:#e0e0e0;letter-spacing:-0.25px;">Properties</span>
<span style="left:1532.5px;top:163.6px;font:15.5px/15.5px 'Liberation Sans',sans-serif;color:#e0e0e0;letter-spacing:-0.56px;">Groups</span>
<span style="left:1633.0px;top:163.6px;font:15.5px/15.5px 'Liberation Sans',sans-serif;color:#e0e0e0;letter-spacing:0.17px;">Utilities</span>
<span style="left:1744.4px;top:163.6px;font:15.5px/15.5px 'Liberation Sans',sans-serif;color:#e0e0e0;letter-spacing:0.10px;">Clipboard</span>
<span style="left:1833.9px;top:163.6px;font:15.5px/15.5px 'Liberation Sans',sans-serif;color:#e0e0e0;letter-spacing:-0.50px;">View</span>
<span style="left:12.4px;top:113.9px;font:15.5px/15.5px 'Liberation Sans',sans-serif;color:#e0e0e0;letter-spacing:-0.45px;">Line</span>
<span style="left:53.4px;top:113.9px;font:15.5px/15.5px 'Liberation Sans',sans-serif;color:#e0e0e0;letter-spacing:-0.33px;">Polyline</span>
<span style="left:122.5px;top:115.1px;font:15.5px/15.5px 'Liberation Sans',sans-serif;color:#e0e0e0;letter-spacing:-0.35px;">Circle</span>
<span style="left:187.0px;top:115.1px;font:15.5px/15.5px 'Liberation Sans',sans-serif;color:#e0e0e0;letter-spacing:-0.51px;">Arc</span>
<span style="left:310.4px;top:71.9px;font:15.5px/15.5px 'Liberation Sans',sans-serif;color:#e0e0e0;letter-spacing:0.05px;">Move</span>
<span style="left:402.0px;top:71.9px;font:15.5px/15.5px 'Liberation Sans',sans-serif;color:#e0e0e0;letter-spacing:-0.06px;">Rotate</span>
<span style="left:490.0px;top:71.9px;font:15.5px/15.5px 'Liberation Sans',sans-serif;color:#e0e0e0;letter-spacing:-0.35px;">Trim</span>
<span style="left:311.7px;top:102.7px;font:15.5px/15.5px 'Liberation Sans',sans-serif;color:#e0e0e0;letter-spacing:-0.70px;">Copy</span>
<span style="left:401.2px;top:102.7px;font:15.5px/15.5px 'Liberation Sans',sans-serif;color:#e0e0e0;letter-spacing:0.31px;">Mirror</span>
<span style="left:489.7px;top:102.7px;font:15.5px/15.5px 'Liberation Sans',sans-serif;color:#e0e0e0;letter-spacing:0.09px;">Fillet</span>
<span style="left:311.8px;top:133.6px;font:15.5px/15.5px 'Liberation Sans',sans-serif;color:#e0e0e0;letter-spacing:-0.35px;">Stretch</span>
<span style="left:401.8px;top:133.6px;font:15.5px/15.5px 'Liberation Sans',sans-serif;color:#e0e0e0;letter-spacing:-0.80px;">Scale</span>
<span style="left:490.0px;top:133.6px;font:15.5px/15.5px 'Liberation Sans',sans-serif;color:#e0e0e0;letter-spacing:-0.57px;">Array</span>
<span style="left:606.6px;top:61.6px;font:50.5px/50.5px 'Liberation Sans',sans-serif;color:#d2d2d2;">A</span>
<span style="left:610.9px;top:114.7px;font:15.5px/15.5px 'Liberation Sans',sans-serif;color:#e0e0e0;letter-spacing:-0.66px;">Text</span>
<span style="left:652.5px;top:113.6px;font:15.5px/15.5px 'Liberation Sans',sans-serif;color:#e0e0e0;letter-spacing:-0.12px;">Dimension</span>
<span style="left:759.4px;top:133.6px;font:15.5px/15.5px 'Liberation Sans',sans-serif;color:#e0e0e0;letter-spacing:-0.51px;">Table</span>
<span style="left:825.0px;top:113.6px;font:15.5px/15.5px 'Liberation Sans',sans-serif;color:#e0e0e0;letter-spacing:-0.69px;">Layer</span>
<span style="left:809.0px;top:133.6px;font:15.5px/15.5px 'Liberation Sans',sans-serif;color:#e0e0e0;letter-spacing:-0.27px;">Properties</span>
<span style="left:1008.6px;top:71.9px;font:15.5px/15.5px 'Liberation Sans',sans-serif;color:#e0e0e0;">0</span>
<span style="left:1032.0px;top:102.7px;font:15.5px/15.5px 'Liberation Sans',sans-serif;color:#e0e0e0;letter-spacing:-0.46px;">Make Current</span>
<span style="left:1032.0px;top:133.6px;font:15.5px/15.5px 'Liberation Sans',sans-serif;color:#e0e0e0;letter-spacing:-0.43px;">Match Layer</span>
<span style="left:1153.1px;top:113.1px;font:15.5px/15.5px 'Liberation Sans',sans-serif;color:#e0e0e0;letter-spacing:-0.41px;">Insert</span>
<span style="left:1263.4px;top:114.7px;font:15.5px/15.5px 'Liberation Sans',sans-serif;color:#e0e0e0;letter-spacing:0.09px;">Match</span>
<span style="left:1250.0px;top:133.9px;font:15.5px/15.5px 'Liberation Sans',sans-serif;color:#e0e0e0;letter-spacing:-0.24px;">Properties</span>
<span style="left:1394.2px;top:72.7px;font:15.5px/15.5px 'Liberation Sans',sans-serif;color:#e0e0e0;letter-spacing:-0.84px;">ByLayer</span>
<span style="left:1434.5px;top:102.7px;font:15.5px/15.5px 'Liberation Sans',sans-serif;color:#e0e0e0;letter-spacing:-0.89px;">ByLayer</span>
<span style="left:1434.5px;top:132.7px;font:15.5px/15.5px 'Liberation Sans',sans-serif;color:#e0e0e0;letter-spacing:-0.89px;">ByLayer</span>
<span style="left:1527.5px;top:113.6px;font:15.5px/15.5px 'Liberation Sans',sans-serif;color:#e0e0e0;letter-spacing:-0.42px;">Group</span>
<span style="left:1623.4px;top:114.8px;font:15.5px/15.5px 'Liberation Sans',sans-serif;color:#e0e0e0;letter-spacing:-0.59px;">Measure</span>
<span style="left:1744.2px;top:115.6px;font:15.5px/15.5px 'Liberation Sans',sans-serif;color:#e0e0e0;letter-spacing:-1.10px;">Paste</span>
<span style="left:1850.2px;top:114.5px;font:15.5px/15.5px 'Liberation Sans',sans-serif;color:#e0e0e0;letter-spacing:-1.06px;">Base</span>
<span style="left:38.7px;top:194.7px;font:15.5px/15.5px 'Liberation Sans',sans-serif;color:#c4c8d0;letter-spacing:-0.33px;">Start</span>
<span style="left:192.5px;top:194.7px;font:bold 15.5px/15.5px 'Liberation Sans',sans-serif;color:#ffffff;letter-spacing:-0.31px;">Bản vẽ Cad Toyota Fortuner 2018*</span>
<span style="left:1774.8px;top:5.2px;font:15.5px/15.5px 'Liberation Sans',sans-serif;color:#767b84;">?</span>
<span style="left:1896.4px;top:546.0px;font:bold 10.5px/10.5px 'Liberation Sans',sans-serif;color:#8fa3be;letter-spacing:1.56px;">2D</span>
<span style="left:458.0px;top:856.8px;font:15px/15px 'Liberation Mono',monospace;color:#ffffff;letter-spacing:0.05px;">Command:   &lt;Switching to: Layout1&gt;</span>
<span style="left:457.6px;top:881.5px;font:15px/15px 'Liberation Mono',monospace;color:#ffffff;letter-spacing:0.25px;">Regenerating layout.</span>
<span style="left:457.6px;top:906.5px;font:15px/15px 'Liberation Mono',monospace;color:#ffffff;letter-spacing:0.12px;">Regenerating model - caching viewports.</span>
<span style="left:492.8px;top:937.3px;font:italic 15px/15px 'Liberation Mono',monospace;color:#8a8a8a;letter-spacing:0.11px;">Type a command</span>
<span style="left:28.4px;top:964.7px;font:15.5px/15.5px 'Liberation Sans',sans-serif;color:#c4c8d0;letter-spacing:0.42px;">Model</span>
<span style="left:102.0px;top:964.7px;font:bold 15.5px/15.5px 'Liberation Sans',sans-serif;color:#ffffff;letter-spacing:-0.55px;">Layout1</span>
<span style="left:187.4px;top:964.7px;font:15.5px/15.5px 'Liberation Sans',sans-serif;color:#c4c8d0;letter-spacing:-0.38px;">Layout2</span>
<span style="left:1284.5px;top:994.9px;font:15.5px/15.5px 'Liberation Sans',sans-serif;color:#f0f0f0;letter-spacing:-1.56px;">PAPER</span>
</div></body></html>
